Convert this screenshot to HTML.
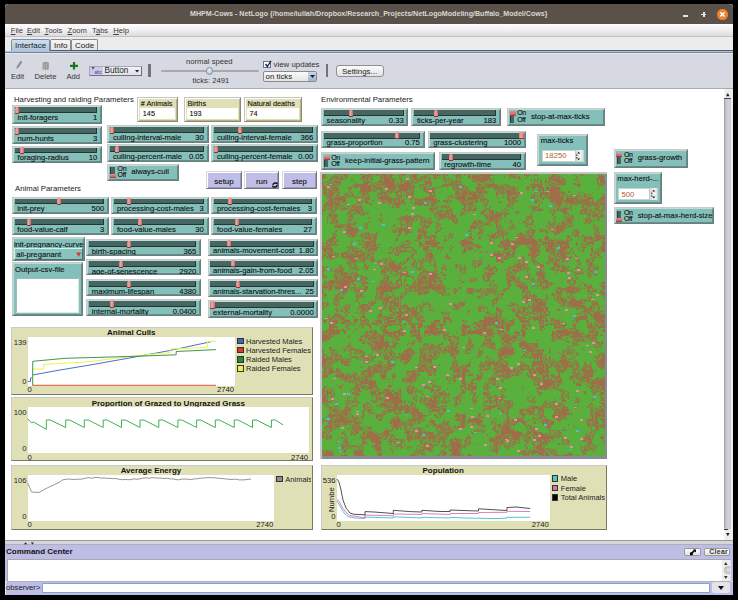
<!DOCTYPE html><html><head><meta charset="utf-8"><style>
*{box-sizing:border-box;margin:0;padding:0}
html,body{width:738px;height:600px;overflow:hidden;background:#000;font-family:"Liberation Sans", sans-serif;}
.a{position:absolute}
.w{position:absolute;border:1px solid;border-color:#c9c9c9 #6e7e7c #6e7e7c #c9c9c9;box-shadow:inset 1px 1px 0 rgba(255,255,255,.45), inset -1px -1px 0 rgba(0,0,0,.25);font-size:7.7px;color:#111;-webkit-text-stroke:0.2px rgba(0,0,0,.5);white-space:nowrap;overflow:hidden}
.sl{background:#85bfb9}
.trk{position:absolute;top:1.1px;height:5.9px;background:#476662;box-shadow:inset -1px -1px 0 #243634}
.knob{position:absolute;top:0.6px;width:4.2px;height:7.3px;background:linear-gradient(90deg,#e07a76,#f2a6a2 45%,#d06460);border-radius:1.5px 1.5px 0 0;border-bottom:1px solid #8a3a38}
.lbl{position:absolute;left:4.6px;top:6.9px;line-height:9px}
.val{position:absolute;right:3.7px;top:6.9px;line-height:9px}
.sw{background:#85bfb9}
.swt{position:absolute;left:2.2px;top:2.2px;width:4.3px;height:11.4px;background:#476662;border-left:1px solid #2a3a38}
.swk{position:absolute;left:1.8px;width:5.8px;height:4.4px;background:linear-gradient(#e89090,#cc5c5c);border-bottom:1px solid #a04040}
.on,.off{position:absolute;left:9.2px;font-size:7px;line-height:8px;letter-spacing:-0.3px}.on{top:0.2px}.off{top:6.6px}
.swl{position:absolute;left:23px;top:2.7px;line-height:9px}
.mon{background:#e0e0b6;border-color:#c4c4c4 #8c8c6c #8c8c6c #c4c4c4;box-shadow:inset 1px 1px 0 #fff, inset -1px -1px 0 #b4b48c}
.ml{position:absolute;left:2.4px;top:0.6px;line-height:9px;font-size:7.3px}
.mv{position:absolute;left:1.6px;right:2px;top:9.5px;bottom:1.3px;background:#fff}
.mv span{position:absolute;left:2.8px;top:0.9px;line-height:9px;font-size:7.3px}
.btn{background:#bebee6;text-align:center;font-size:7.9px;border-color:#d8d8d8 #70708a #70708a #d8d8d8;box-shadow:inset 1px 1px 0 #fff, inset -1px -1px 0 #9a9ab8}
.btn span{position:absolute;left:0;right:0;top:4.7px;line-height:9px}
.fev{position:absolute;left:26.4px;top:9.5px}
.plot{position:absolute;background:#e0e0b6;border:1px solid;border-color:#c9c9c9 #7a7a60 #7a7a60 #c9c9c9;font-size:7.7px;color:#222;white-space:nowrap}
.pt2{text-align:center;font-weight:bold;line-height:9px;font-size:8px;color:#111}
.pa{position:absolute;background:#fff}
.ax{line-height:9px;font-size:7.7px;color:#222}
.lg{line-height:9px;font-size:7.5px;color:#222;white-space:nowrap}
.lg i{position:absolute;left:0;top:1px;width:6.5px;height:6.5px;border:1px solid #333}
.lg span{position:absolute;left:9px;top:0}
</style></head><body>

<div class="a" style="left:5px;top:4px;width:728px;height:590.9px;background:#ececec;border-radius:3px 3px 0 0;overflow:hidden">
</div>
<div class="a" style="left:5px;top:4px;width:728px;height:20px;background:#5a514b;border-radius:4px 4px 0 0"></div>
<div class="a" style="left:190px;top:10.2px;font-size:7.1px;font-weight:bold;color:#dcd8d0;white-space:nowrap;line-height:9px">MHPM-Cows - NetLogo {/home/iullah/Dropbox/Research_Projects/NetLogoModeling/Buffalo_Model/Cows}</div>
<div class="a" style="left:683.2px;top:15.2px;width:5px;height:1.6px;background:#e6e2da"></div>
<div class="a" style="left:701.4px;top:13.7px;width:5px;height:1.6px;background:#e6e2da"></div><div class="a" style="left:703.1px;top:12px;width:1.6px;height:5px;background:#e6e2da"></div>
<div class="a" style="left:717.4px;top:9px;width:10.6px;height:10.6px;border-radius:50%;background:#f0842c"></div>
<svg class="a" style="left:717.4px;top:9px" width="11" height="11"><path d="M3.3 3.3 L7.5 7.5 M7.5 3.3 L3.3 7.5" stroke="#fff" stroke-width="1.5"/></svg>
<div class="a" style="left:5px;top:24px;width:728px;height:13.4px;background:linear-gradient(#fdfdfd,#f2f2f4 45%,#dcdce0);border-bottom:1.4px solid #c0c0c6"></div>
<div class="a" style="left:10.8px;top:25.8px;font-size:7.6px;color:#3a3a3a;line-height:9px"><u>F</u>ile</div>
<div class="a" style="left:27px;top:25.8px;font-size:7.6px;color:#3a3a3a;line-height:9px"><u>E</u>dit</div>
<div class="a" style="left:44.6px;top:25.8px;font-size:7.6px;color:#3a3a3a;line-height:9px"><u>T</u>ools</div>
<div class="a" style="left:67.5px;top:25.8px;font-size:7.6px;color:#3a3a3a;line-height:9px"><u>Z</u>oom</div>
<div class="a" style="left:92.1px;top:25.8px;font-size:7.6px;color:#3a3a3a;line-height:9px">T<u>a</u>bs</div>
<div class="a" style="left:113.3px;top:25.8px;font-size:7.6px;color:#3a3a3a;line-height:9px"><u>H</u>elp</div>
<div class="a" style="left:5px;top:37px;width:728px;height:14px;background:#ececec"></div>
<div class="a" style="left:11px;top:38.5px;width:39px;height:13px;background:linear-gradient(#cfdff0,#a9c2dc);border:1px solid #7e8ea0;border-bottom:none;border-radius:2px 2px 0 0"></div>
<div class="a" style="left:15px;top:40.5px;font-size:8px;color:#222;line-height:9px">Interface</div>
<div class="a" style="left:50px;top:39px;width:21px;height:12px;background:linear-gradient(#f4f4f4,#e4e4e4);border:1px solid #8a8a8a;border-bottom:none;border-radius:2px 2px 0 0"></div>
<div class="a" style="left:54px;top:40.5px;font-size:8px;color:#222;line-height:9px">Info</div>
<div class="a" style="left:71px;top:39px;width:27px;height:12px;background:linear-gradient(#f4f4f4,#e4e4e4);border:1px solid #8a8a8a;border-bottom:none;border-radius:2px 2px 0 0"></div>
<div class="a" style="left:75px;top:40.5px;font-size:8px;color:#222;line-height:9px">Code</div>
<div class="a" style="left:50px;top:50.2px;width:683px;height:0.8px;background:#505868"></div><div class="a" style="left:5px;top:50.8px;width:728px;height:1.6px;background:#afc4dc"></div>
<div class="a" style="left:5px;top:52.3px;width:728px;height:36.7px;background:#d6d9e1;border-bottom:1px solid #a8aab0;border-top:1.2px solid #76849a;box-shadow:inset 0 1px 0 #e6e8ee"></div>
<svg class="a" style="left:0;top:0" width="100" height="90"><path d="M16.3 69 L17 66 L20.6 60.8 L22.4 62 L18.8 67.2 Z" fill="#8e8e8e"/><path d="M42.6 62.8 Q45.7 60.6 48.8 62.8 L48.8 69.2 Q45.7 70.4 42.6 69.2 Z" fill="#9a9a9a"/><path d="M44.2 63.5 V68.8 M46.6 63.5 V68.8" stroke="#b8b8b8" stroke-width="0.8"/><path d="M70 65.85 H78 M74 62.1 V69.6" stroke="#1a7a1a" stroke-width="2.2"/></svg>
<div class="a" style="left:11px;top:72px;font-size:7.6px;color:#333;line-height:9px">Edit</div>
<div class="a" style="left:34.5px;top:72px;font-size:7.6px;color:#333;line-height:9px">Delete</div>
<div class="a" style="left:66.5px;top:72px;font-size:7.6px;color:#333;line-height:9px">Add</div>
<div class="a" style="left:88.8px;top:65.5px;width:53px;height:10.3px;background:linear-gradient(#f2f2f6,#e0e0e6);border:1px solid;border-color:#a8a8b0 #707078 #707078 #a8a8b0"></div>
<div class="a" style="left:90.3px;top:66.6px;width:12.5px;height:8px;background:#c8c8f0"></div>
<svg class="a" style="left:91px;top:67px" width="12" height="8"><path d="M0.5 0.3 L3.5 0.3 L2 2.2Z" fill="#223"/><text x="3.6" y="6.6" font-size="4.5" font-family="Liberation Sans" fill="#445">abc</text></svg>
<div class="a" style="left:104.6px;top:66.2px;font-size:8.2px;color:#222;line-height:9px">Button</div>
<svg class="a" style="left:135px;top:69.6px" width="5" height="3"><path d="M0 0 L4.2 0 L2.1 2.5Z" fill="#222"/></svg>
<div class="a" style="left:148.3px;top:64.3px;width:2.4px;height:12.5px;background:#747474"></div>
<div class="a" style="left:186px;top:56.5px;font-size:7.7px;color:#333;line-height:9px">normal speed</div>
<div class="a" style="left:160.5px;top:70px;width:98px;height:1.6px;background:#a6a9ae;border-radius:1px"></div>
<div class="a" style="left:205.5px;top:67px;width:7.5px;height:7.5px;border-radius:50%;background:radial-gradient(circle at 40% 35%,#e6eef6,#a6bcd2);border:1px solid #8090a4"></div>
<div class="a" style="left:192.5px;top:76px;font-size:7.7px;color:#333;line-height:9px">ticks: 2491</div>
<div class="a" style="left:263px;top:60.5px;width:7.5px;height:7.5px;background:#fff;border:1px solid #5a7aa0"></div>
<svg class="a" style="left:263.5px;top:59.5px" width="8" height="8"><path d="M1.5 4 L3.3 6.5 L7 0.8" stroke="#223" stroke-width="1.3" fill="none"/></svg>
<div class="a" style="left:273.5px;top:59.5px;font-size:7.9px;color:#333;line-height:9px">view updates</div>
<div class="a" style="left:263px;top:70.5px;width:53.5px;height:11px;background:linear-gradient(#fafafa,#e4e4e4);border:1px solid #8a8a8a;border-radius:2px"></div>
<div class="a" style="left:307.5px;top:71.5px;width:8px;height:9px;background:linear-gradient(#c8d6e6,#9fb4cc)"></div>
<svg class="a" style="left:309.5px;top:74.5px" width="5" height="3"><path d="M0 0 L5 0 L2.5 3Z" fill="#222"/></svg>
<div class="a" style="left:265.5px;top:71.5px;font-size:7.9px;color:#222;line-height:9px">on ticks</div>
<div class="a" style="left:325.5px;top:63.7px;width:2.5px;height:13.3px;background:#747474"></div>
<div class="a" style="left:335.5px;top:64.8px;width:48px;height:12.7px;background:linear-gradient(#fbfbfb,#e2e2e2);border:1px solid #909090;border-radius:3px"></div>
<div class="a" style="left:342px;top:66.5px;font-size:7.9px;color:#222;line-height:9px">Settings...</div>
<div class="a" style="left:5px;top:89px;width:719px;height:451px;background:#fff"></div>
<div class="a" style="left:724px;top:89px;width:8.8px;height:451px;background:#ededed;border-left:1px solid #f8f8f8"></div>
<div class="a" style="left:724px;top:98.3px;width:7.2px;height:431.4px;background:linear-gradient(90deg,#9a9aa0,#c4c4ca 25%,#d2d2d8 60%,#c8c8ce);border-radius:0 0 4px 4px;border-top:1px solid #444"></div>
<div class="a" style="left:724px;top:528.5px;width:4px;height:1.2px;background:#333"></div>
<svg class="a" style="left:726px;top:92.5px" width="4" height="4"><path d="M0 3.3 L3.6 3.3 L1.8 0Z" fill="#222"/></svg>
<svg class="a" style="left:726.2px;top:533px" width="4" height="4"><path d="M0 0 L3.6 0 L1.8 3.3Z" fill="#222"/></svg>
<div class="a" style="left:14px;top:94.5px;font-size:7.75px;color:#222;line-height:9px">Harvesting and raiding Parameters</div>
<div class="a" style="left:15px;top:184px;font-size:7.75px;color:#222;line-height:9px">Animal Parameters</div>
<div class="a" style="left:321px;top:94.5px;font-size:7.75px;color:#222;line-height:9px">Environmental Parameters</div>
<div class="w sl" style="left:12px;top:105px;width:90px;height:18.5px;"><div class="trk" style="left:1.9px;width:82.4px"></div><div class="knob" style="left:1.9px"></div><span class="lbl">init-foragers</span><span class="val">1</span></div>
<div class="w sl" style="left:12px;top:126px;width:90px;height:17.5px;"><div class="trk" style="left:1.9px;width:82.4px"></div><div class="knob" style="left:1.9px"></div><span class="lbl">num-hunts</span><span class="val">3</span></div>
<div class="w sl" style="left:12px;top:145.5px;width:90px;height:17.5px;"><div class="trk" style="left:1.9px;width:82.4px"></div><div class="knob" style="left:7.3px"></div><span class="lbl">foraging-radius</span><span class="val">10</span></div>
<div class="w sl" style="left:107.3px;top:125px;width:101.3px;height:18px;"><div class="trk" style="left:1.9px;width:93.7px"></div><div class="knob" style="left:1.9px"></div><span class="lbl">culling-interval-male</span><span class="val">30</span></div>
<div class="w sl" style="left:107.3px;top:144px;width:101.3px;height:17.5px;"><div class="trk" style="left:1.9px;width:93.7px"></div><div class="knob" style="left:6.4px"></div><span class="lbl">culling-percent-male</span><span class="val">0.05</span></div>
<div class="w sl" style="left:211.4px;top:125px;width:106.6px;height:18px;"><div class="trk" style="left:1.9px;width:99.0px"></div><div class="knob" style="left:25.2px"></div><span class="lbl">culling-interval-female</span><span class="val">366</span></div>
<div class="w sl" style="left:211.4px;top:144px;width:106.6px;height:17.5px;"><div class="trk" style="left:1.9px;width:99.0px"></div><div class="knob" style="left:1.9px"></div><span class="lbl">culling-percent-female</span><span class="val">0.00</span></div>
<div class="w sw" style="left:107.3px;top:163.7px;width:72.00000000000001px;height:16.900000000000006px;"><div class="swt"></div><div class="swk" style="top:9.2px"></div><span class="on">On</span><span class="off">Off</span><span class="swl">always-cull</span></div>
<div class="w mon" style="left:137.4px;top:97.4px;width:41.0px;height:24.39999999999999px;"><span class="ml"># Animals</span><div class="mv"><span>145</span></div></div>
<div class="w mon" style="left:184px;top:97.4px;width:57px;height:24.39999999999999px;"><span class="ml">Births</span><div class="mv"><span>193</span></div></div>
<div class="w mon" style="left:244px;top:97.4px;width:58.39999999999998px;height:24.39999999999999px;"><span class="ml">Natural deaths</span><div class="mv"><span>74</span></div></div>
<div class="w btn" style="left:206.2px;top:171.3px;width:35.60000000000002px;height:18.19999999999999px;"><span>setup</span></div>
<div class="w btn" style="left:244.2px;top:171.3px;width:34.80000000000001px;height:18.19999999999999px;"><span>run</span><svg class="fev" width="6" height="6" viewBox="0 0 6 6"><path d="M0.9 2.9 A2.1 2.1 0 0 1 4.6 1.7 M5.1 3.1 A2.1 2.1 0 0 1 1.4 4.3" stroke="#000" stroke-width="1.3" fill="none"/><path d="M3.6 0.6 L5.8 0.8 L5.3 2.9Z M2.4 5.4 L0.2 5.2 L0.7 3.1Z" fill="#000"/></svg></div>
<div class="w btn" style="left:282.4px;top:171.3px;width:34.30000000000001px;height:18.19999999999999px;"><span>step</span></div>
<div class="w sl" style="left:11.7px;top:196.5px;width:97.3px;height:17.80000000000001px;"><div class="trk" style="left:1.9px;width:89.7px"></div><div class="knob" style="left:44.6px"></div><span class="lbl">init-prey</span><span class="val">500</span></div>
<div class="w sl" style="left:11.7px;top:217.3px;width:97.3px;height:17.5px;"><div class="trk" style="left:1.9px;width:89.7px"></div><div class="knob" style="left:13.9px"></div><span class="lbl">food-value-calf</span><span class="val">3</span></div>
<div class="w sl" style="left:111.4px;top:196.5px;width:97.19999999999999px;height:17.80000000000001px;"><div class="trk" style="left:1.9px;width:89.6px"></div><div class="knob" style="left:14.5px"></div><span class="lbl">processing-cost-males</span><span class="val">3</span></div>
<div class="w sl" style="left:111.4px;top:217.3px;width:97.19999999999999px;height:17.69999999999999px;"><div class="trk" style="left:1.9px;width:89.6px"></div><div class="knob" style="left:25.3px"></div><span class="lbl">food-value-males</span><span class="val">30</span></div>
<div class="w sl" style="left:211.4px;top:196.5px;width:105.29999999999998px;height:17.80000000000001px;"><div class="trk" style="left:1.9px;width:97.7px"></div><div class="knob" style="left:15.9px"></div><span class="lbl">processing-cost-females</span><span class="val">3</span></div>
<div class="w sl" style="left:211.4px;top:217.3px;width:105.29999999999998px;height:17.69999999999999px;"><div class="trk" style="left:1.9px;width:97.7px"></div><div class="knob" style="left:22.5px"></div><span class="lbl">food-value-females</span><span class="val">27</span></div>
<div class="w sl" style="left:86.2px;top:239px;width:114.8px;height:16.80000000000001px;"><div class="trk" style="left:1.9px;width:107.2px"></div><div class="knob" style="left:39.8px"></div><span class="lbl">birth-spacing</span><span class="val">365</span></div>
<div class="w sl" style="left:86.2px;top:259px;width:114.8px;height:16.30000000000001px;"><div class="trk" style="left:1.9px;width:107.2px"></div><div class="knob" style="left:31.7px"></div><span class="lbl">age-of-senescence</span><span class="val">2920</span></div>
<div class="w sl" style="left:86.2px;top:279px;width:114.8px;height:17px;"><div class="trk" style="left:1.9px;width:107.2px"></div><div class="knob" style="left:39.8px"></div><span class="lbl">maximum-lifespan</span><span class="val">4380</span></div>
<div class="w sl" style="left:86.2px;top:298.7px;width:114.8px;height:17.30000000000001px;"><div class="trk" style="left:1.9px;width:107.2px"></div><div class="knob" style="left:23.1px"></div><span class="lbl">internal-mortality</span><span class="val">0.0400</span></div>
<div class="w sl" style="left:207.5px;top:238.6px;width:110.89999999999998px;height:17.200000000000017px;"><div class="trk" style="left:1.9px;width:103.3px"></div><div class="knob" style="left:18.7px"></div><span class="lbl">animals-movement-cost</span><span class="val">1.80</span></div>
<div class="w sl" style="left:207.5px;top:258.6px;width:110.89999999999998px;height:17.899999999999977px;"><div class="trk" style="left:1.9px;width:103.3px"></div><div class="knob" style="left:22.3px"></div><span class="lbl">animals-gain-from-food</span><span class="val">2.05</span></div>
<div class="w sl" style="left:207.5px;top:279.2px;width:110.89999999999998px;height:17.80000000000001px;"><div class="trk" style="left:1.9px;width:103.3px"></div><div class="knob" style="left:27.7px"></div><span class="lbl">animals-starvation-thres...</span><span class="val">25</span></div>
<div class="w sl" style="left:207.5px;top:299.7px;width:110.89999999999998px;height:17.900000000000034px;"><div class="trk" style="left:1.9px;width:103.3px"></div><div class="knob" style="left:1.9px"></div><span class="lbl">external-mortality</span><span class="val">0.0000</span></div>
<div class="w sl" style="left:11.7px;top:237.4px;width:73.3px;height:23.900000000000006px;"><span class="a" style="left:1.2px;top:1.2px;line-height:9px">init-pregnancy-curve</span><div class="a" style="left:1.2px;top:9.8px;width:69.4px;height:11.6px;border:1px solid;border-color:#d4f0ec #4c6e6a #4c6e6a #d4f0ec;background:#88c4be"><span class="a" style="left:1.4px;top:0.5px;line-height:9px">all-preganant</span><svg class="a" style="left:61px;top:2.6px" width="6" height="6"><path d="M0.2 0.4 L5 0.4 L2.6 5Z" fill="#d83030"/></svg></div></div>
<div class="w sl" style="left:11.7px;top:262.3px;width:70.89999999999999px;height:54.0px;"><span class="a" style="left:2.4px;top:2.2px;line-height:9px">Output-csv-file</span><div class="a" style="left:3.3px;top:14.3px;width:63px;height:35.1px;background:#fff;border:1px solid;border-color:#9cbcb8 #d8ece8 #d8ece8 #9cbcb8"></div></div>
<div class="w sl" style="left:321px;top:108.3px;width:87.39999999999998px;height:17.900000000000006px;"><div class="trk" style="left:1.9px;width:79.8px"></div><div class="knob" style="left:26.8px"></div><span class="lbl">seasonality</span><span class="val">0.33</span></div>
<div class="w sl" style="left:411.4px;top:108.3px;width:89.60000000000002px;height:17.900000000000006px;"><div class="trk" style="left:1.9px;width:82.0px"></div><div class="knob" style="left:21.4px"></div><span class="lbl">ticks-per-year</span><span class="val">183</span></div>
<div class="w sw" style="left:507px;top:108.3px;width:98.39999999999998px;height:18.10000000000001px;"><div class="swt"></div><div class="swk" style="top:2.2px"></div><span class="on">On</span><span class="off">Off</span><span class="swl">stop-at-max-ticks</span></div>
<div class="w sl" style="left:321px;top:130.6px;width:103.60000000000002px;height:17.599999999999994px;"><div class="trk" style="left:1.9px;width:96.0px"></div><div class="knob" style="left:72.6px"></div><span class="lbl">grass-proportion</span><span class="val">0.75</span></div>
<div class="w sl" style="left:427.6px;top:130.6px;width:98.19999999999993px;height:17.599999999999994px;"><div class="trk" style="left:1.9px;width:90.6px"></div><div class="knob" style="left:90.9px"></div><span class="lbl">grass-clustering</span><span class="val">1000</span></div>
<div class="w sw" style="left:321px;top:152.4px;width:114.39999999999998px;height:17.19999999999999px;"><div class="swt"></div><div class="swk" style="top:2.2px"></div><span class="on">On</span><span class="off">Off</span><span class="swl">keep-initial-grass-pattern</span></div>
<div class="w sl" style="left:438.7px;top:152.4px;width:87.09999999999997px;height:17.599999999999994px;"><div class="trk" style="left:1.9px;width:79.5px"></div><div class="knob" style="left:9.4px"></div><span class="lbl">regrowth-time</span><span class="val">40</span></div>
<div class="w sl" style="left:537.2px;top:133.5px;width:50.59999999999991px;height:32.0px;"><span class="a" style="left:2.6px;top:1.3px;line-height:9px">max-ticks</span></div><div class="a" style="left:541.7px;top:149.6px;width:41.89999999999998px;height:12.0px;background:#fff;border:1px solid #c4d4d2"></div><div class="a" style="left:545.1px;top:151.1px;line-height:9px;font-size:7.7px;color:#b0602c">18250</div><div class="a" style="left:574.6px;top:150.0px;width:8.2px;height:11.2px;background:linear-gradient(90deg,#d8d8d8,#f2f2f2 60%,#e0e0e0);border-left:1px solid #c8c8c8"></div><svg class="a" style="left:576.4px;top:150.79999999999998px" width="6" height="12.0"><path d="M1.2 2.6 L4.2 2.6 L2.7 0.8Z M1.2 7.4 L4.2 7.4 L2.7 9.2Z" fill="#222"/><rect x="0" y="3.5" width="1.3" height="1.5" fill="#555"/><rect x="0" y="6.0" width="1.3" height="1.5" fill="#555"/></svg>
<div class="w sw" style="left:613.7px;top:149.4px;width:74.0px;height:18.19999999999999px;"><div class="swt"></div><div class="swk" style="top:2.2px"></div><span class="on">On</span><span class="off">Off</span><span class="swl">grass-growth</span></div>
<div class="w sl" style="left:613.7px;top:171.7px;width:48.299999999999955px;height:32.30000000000001px;"><span class="a" style="left:2.6px;top:1.3px;line-height:9px">max-herd-...</span></div><div class="a" style="left:618px;top:188px;width:40.299999999999955px;height:12.199999999999989px;background:#fff;border:1px solid #c4d4d2"></div><div class="a" style="left:621.4px;top:189.5px;line-height:9px;font-size:7.7px;color:#b0602c">500</div><div class="a" style="left:649.3px;top:188.4px;width:8.2px;height:11.399999999999988px;background:linear-gradient(90deg,#d8d8d8,#f2f2f2 60%,#e0e0e0);border-left:1px solid #c8c8c8"></div><svg class="a" style="left:651.0999999999999px;top:189.2px" width="6" height="12.199999999999989"><path d="M1.2 2.6 L4.2 2.6 L2.7 0.8Z M1.2 7.6 L4.2 7.6 L2.7 9.4Z" fill="#222"/><rect x="0" y="3.6" width="1.3" height="1.5" fill="#555"/><rect x="0" y="6.1" width="1.3" height="1.5" fill="#555"/></svg>
<div class="w sw" style="left:613.7px;top:207.4px;width:100.59999999999991px;height:17.099999999999994px;"><div class="swt"></div><div class="swk" style="top:9.2px"></div><span class="on">On</span><span class="off">Off</span><span class="swl">stop-at-max-herd-size</span></div>
<div class="a" style="left:320.4px;top:171.8px;width:286.6px;height:286.9px;background:#8a8a92;border-top:2px solid #c4c4c8;border-left:2px solid #c4c4c8"></div>
<svg class="a" style="left:322.4px;top:173.8px" width="282.8" height="282.3" shape-rendering="crispEdges"><defs><pattern id="dz" width="37" height="37" patternUnits="userSpaceOnUse"><rect width="37" height="37" fill="#59b03c"/><path d="M1 0.5h2M4 0.5h2M7 0.5h4M12 0.5h1M15 0.5h2M18 0.5h1M20 0.5h1M22 0.5h1M24 0.5h1M26 0.5h1M28 0.5h2M31 0.5h4M0 1.5h3M4 1.5h1M7 1.5h2M11 1.5h1M14 1.5h1M18 1.5h7M26 1.5h2M29 1.5h3M34 1.5h3M1 2.5h2M4 2.5h1M8 2.5h2M11 2.5h2M14 2.5h1M16 2.5h1M19 2.5h2M23 2.5h1M27 2.5h2M33 2.5h4M0 3.5h2M3 3.5h2M7 3.5h2M10 3.5h3M15 3.5h3M20 3.5h2M24 3.5h1M26 3.5h1M28 3.5h2M31 3.5h4M36 3.5h1M0 4.5h2M4 4.5h4M9 4.5h1M12 4.5h1M14 4.5h6M21 4.5h3M25 4.5h3M29 4.5h1M32 4.5h1M34 4.5h1M0 5.5h2M4 5.5h1M6 5.5h3M11 5.5h1M15 5.5h1M17 5.5h3M21 5.5h1M24 5.5h3M28 5.5h3M32 5.5h1M34 5.5h1M36 5.5h1M1 6.5h2M4 6.5h2M7 6.5h1M10 6.5h8M20 6.5h1M22 6.5h2M29 6.5h1M31 6.5h1M34 6.5h1M36 6.5h1M0 7.5h2M3 7.5h1M6 7.5h3M10 7.5h1M12 7.5h5M18 7.5h2M25 7.5h1M28 7.5h1M31 7.5h1M33 7.5h3M0 8.5h1M3 8.5h3M8 8.5h6M15 8.5h7M25 8.5h12M1 9.5h2M5 9.5h4M10 9.5h1M13 9.5h1M16 9.5h7M24 9.5h1M27 9.5h6M34 9.5h2M0 10.5h2M4 10.5h1M6 10.5h2M11 10.5h1M13 10.5h1M15 10.5h3M19 10.5h1M24 10.5h11M36 10.5h1M1 11.5h3M6 11.5h1M8 11.5h5M15 11.5h1M17 11.5h8M26 11.5h4M32 11.5h5M1 12.5h2M4 12.5h2M8 12.5h2M11 12.5h4M16 12.5h5M22 12.5h1M24 12.5h1M26 12.5h1M28 12.5h1M33 12.5h1M35 12.5h2M0 13.5h1M2 13.5h1M4 13.5h5M10 13.5h3M15 13.5h4M22 13.5h3M27 13.5h2M32 13.5h5M1 14.5h3M6 14.5h4M11 14.5h2M14 14.5h1M17 14.5h5M25 14.5h4M31 14.5h3M36 14.5h1M1 15.5h2M4 15.5h1M6 15.5h5M12 15.5h9M22 15.5h5M28 15.5h2M31 15.5h1M33 15.5h2M36 15.5h1M0 16.5h4M5 16.5h9M15 16.5h2M19 16.5h2M25 16.5h1M29 16.5h1M31 16.5h1M34 16.5h3M0 17.5h1M2 17.5h2M6 17.5h4M12 17.5h1M14 17.5h2M17 17.5h1M19 17.5h1M21 17.5h3M25 17.5h2M28 17.5h2M33 17.5h2M1 18.5h1M3 18.5h6M10 18.5h1M12 18.5h1M15 18.5h6M22 18.5h2M25 18.5h1M27 18.5h4M33 18.5h2M1 19.5h3M5 19.5h3M10 19.5h10M21 19.5h1M26 19.5h3M31 19.5h1M33 19.5h2M36 19.5h1M0 20.5h5M6 20.5h3M10 20.5h18M29 20.5h1M31 20.5h1M35 20.5h2M0 21.5h1M3 21.5h1M5 21.5h4M10 21.5h15M26 21.5h3M30 21.5h2M33 21.5h2M36 21.5h1M1 22.5h1M3 22.5h1M5 22.5h6M13 22.5h1M17 22.5h4M23 22.5h2M26 22.5h2M29 22.5h2M32 22.5h2M35 22.5h2M0 23.5h8M10 23.5h2M13 23.5h4M18 23.5h3M22 23.5h1M26 23.5h5M33 23.5h1M35 23.5h2M0 24.5h2M3 24.5h2M6 24.5h1M8 24.5h2M11 24.5h4M17 24.5h1M19 24.5h3M23 24.5h4M28 24.5h1M30 24.5h7M0 25.5h1M2 25.5h7M10 25.5h5M19 25.5h1M22 25.5h2M25 25.5h1M27 25.5h1M29 25.5h1M31 25.5h1M33 25.5h1M36 25.5h1M1 26.5h3M5 26.5h4M12 26.5h1M14 26.5h1M16 26.5h2M21 26.5h1M25 26.5h2M28 26.5h2M31 26.5h3M35 26.5h1M2 27.5h2M7 27.5h3M11 27.5h3M18 27.5h1M21 27.5h2M25 27.5h9M35 27.5h1M0 28.5h1M4 28.5h4M11 28.5h1M13 28.5h1M16 28.5h1M18 28.5h3M24 28.5h1M26 28.5h1M28 28.5h3M32 28.5h2M35 28.5h1M0 29.5h1M2 29.5h1M4 29.5h1M6 29.5h3M11 29.5h3M15 29.5h7M23 29.5h2M26 29.5h4M33 29.5h3M1 30.5h2M5 30.5h1M7 30.5h3M11 30.5h1M13 30.5h6M22 30.5h1M24 30.5h3M28 30.5h8M0 31.5h2M3 31.5h3M10 31.5h3M14 31.5h5M22 31.5h3M26 31.5h1M28 31.5h4M34 31.5h1M36 31.5h1M1 32.5h1M4 32.5h1M6 32.5h1M8 32.5h2M12 32.5h2M15 32.5h10M26 32.5h1M28 32.5h1M30 32.5h2M34 32.5h2M0 33.5h5M6 33.5h2M9 33.5h2M13 33.5h2M16 33.5h2M19 33.5h1M21 33.5h2M27 33.5h2M30 33.5h3M34 33.5h1M36 33.5h1M0 34.5h2M3 34.5h5M10 34.5h3M14 34.5h1M16 34.5h1M20 34.5h1M23 34.5h4M28 34.5h2M31 34.5h1M33 34.5h4M0 35.5h1M2 35.5h3M6 35.5h7M15 35.5h2M18 35.5h2M22 35.5h11M34 35.5h3M0 36.5h3M4 36.5h1M9 36.5h1M15 36.5h1M18 36.5h1M20 36.5h3M25 36.5h2M28 36.5h1M30 36.5h5M36 36.5h1" stroke="#9d6e48" stroke-width="1"/></pattern></defs><rect width="282.8" height="282.3" fill="#59b03c"/><g transform="scale(1.2)"><path d="M0 0.5h1M2 0.5h2M10 0.5h7M20 0.5h2M32 0.5h8M43 0.5h7M54 0.5h6M63 0.5h4M68 0.5h2M72 0.5h3M79 0.5h1M83 0.5h1M86 0.5h19M109 0.5h4M114 0.5h6M121 0.5h2M124 0.5h7M132 0.5h2M140 0.5h3M153 0.5h3M161 0.5h3M168 0.5h7M176 0.5h3M190 0.5h2M194 0.5h3M208 0.5h5M215 0.5h4M230 0.5h3M2 1.5h2M9 1.5h9M19 1.5h3M34 1.5h16M54 1.5h6M64 1.5h6M73 1.5h3M79 1.5h3M85 1.5h6M92 1.5h13M110 1.5h3M115 1.5h4M121 1.5h6M128 1.5h6M140 1.5h3M152 1.5h4M159 1.5h6M168 1.5h7M177 1.5h3M189 1.5h3M194 1.5h6M209 1.5h3M215 1.5h3M230 1.5h4M2 2.5h2M7 2.5h15M33 2.5h11M48 2.5h3M55 2.5h5M64 2.5h5M73 2.5h4M78 2.5h12M92 2.5h14M111 2.5h6M122 2.5h4M130 2.5h3M140 2.5h3M152 2.5h13M169 2.5h6M178 2.5h3M188 2.5h3M194 2.5h7M209 2.5h4M229 2.5h2M233 2.5h3M1 3.5h3M6 3.5h14M32 3.5h12M48 3.5h4M57 3.5h5M64 3.5h3M73 3.5h1M75 3.5h2M79 3.5h12M92 3.5h7M101 3.5h6M112 3.5h4M123 3.5h3M130 3.5h3M140 3.5h3M155 3.5h2M160 3.5h6M169 3.5h3M178 3.5h3M186 3.5h4M195 3.5h7M210 3.5h3M228 3.5h3M233 3.5h3M0 4.5h1M6 4.5h13M24 4.5h2M33 4.5h10M48 4.5h5M57 4.5h5M64 4.5h4M75 4.5h1M78 4.5h8M87 4.5h4M93 4.5h3M101 4.5h7M112 4.5h4M124 4.5h2M129 4.5h2M138 4.5h1M140 4.5h3M150 4.5h1M164 4.5h2M174 4.5h1M177 4.5h5M186 4.5h3M198 4.5h5M211 4.5h2M228 4.5h4M235 4.5h1M0 5.5h1M5 5.5h12M24 5.5h2M34 5.5h8M47 5.5h5M60 5.5h2M65 5.5h9M75 5.5h16M101 5.5h9M111 5.5h5M124 5.5h6M138 5.5h5M173 5.5h10M186 5.5h3M200 5.5h3M211 5.5h4M229 5.5h3M235 5.5h1M0 6.5h1M4 6.5h5M10 6.5h6M34 6.5h8M46 6.5h5M60 6.5h22M85 6.5h7M101 6.5h15M125 6.5h7M133 6.5h2M137 6.5h7M173 6.5h10M186 6.5h9M199 6.5h5M211 6.5h5M229 6.5h3M234 6.5h2M0 7.5h3M4 7.5h12M27 7.5h2M34 7.5h2M38 7.5h5M44 7.5h5M60 7.5h9M71 7.5h9M85 7.5h7M101 7.5h9M112 7.5h5M128 7.5h16M174 7.5h6M182 7.5h1M186 7.5h17M209 7.5h7M229 7.5h7M0 8.5h3M4 8.5h12M26 8.5h10M38 8.5h10M61 8.5h7M72 8.5h5M81 8.5h9M91 8.5h1M100 8.5h9M114 8.5h4M129 8.5h17M150 8.5h5M173 8.5h4M178 8.5h5M186 8.5h2M189 8.5h14M210 8.5h6M229 8.5h7M0 9.5h14M26 9.5h10M40 9.5h9M50 9.5h4M61 9.5h7M73 9.5h5M81 9.5h11M99 9.5h13M114 9.5h5M130 9.5h27M173 9.5h11M187 9.5h15M211 9.5h5M230 9.5h6M0 10.5h14M23 10.5h11M41 10.5h7M49 10.5h6M60 10.5h7M74 10.5h5M81 10.5h1M84 10.5h6M98 10.5h4M103 10.5h2M108 10.5h13M129 10.5h32M163 10.5h1M171 10.5h6M178 10.5h6M187 10.5h5M193 10.5h4M213 10.5h2M230 10.5h3M1 11.5h14M22 11.5h11M41 11.5h15M59 11.5h7M74 11.5h5M81 11.5h2M84 11.5h6M92 11.5h2M95 11.5h3M99 11.5h2M103 11.5h1M109 11.5h13M128 11.5h21M150 11.5h13M170 11.5h15M187 11.5h4M194 11.5h4M213 11.5h1M229 11.5h2M0 12.5h15M22 12.5h3M29 12.5h3M41 12.5h11M53 12.5h5M59 12.5h6M72 12.5h5M84 12.5h11M109 12.5h13M128 12.5h5M134 12.5h3M142 12.5h21M170 12.5h5M176 12.5h9M187 12.5h2M196 12.5h3M229 12.5h2M1 13.5h5M7 13.5h6M22 13.5h1M30 13.5h3M39 13.5h7M48 13.5h3M53 13.5h12M72 13.5h5M84 13.5h10M111 13.5h12M128 13.5h4M135 13.5h2M144 13.5h19M171 13.5h3M177 13.5h9M187 13.5h3M196 13.5h4M1 14.5h12M14 14.5h1M22 14.5h3M30 14.5h3M37 14.5h6M44 14.5h1M49 14.5h21M71 14.5h6M85 14.5h9M111 14.5h16M128 14.5h4M134 14.5h4M145 14.5h19M177 14.5h8M187 14.5h3M196 14.5h5M205 14.5h2M213 14.5h4M1 15.5h14M22 15.5h3M31 15.5h8M47 15.5h7M55 15.5h22M87 15.5h7M111 15.5h21M134 15.5h5M145 15.5h13M160 15.5h5M177 15.5h4M182 15.5h8M197 15.5h6M205 15.5h3M213 15.5h5M225 15.5h2M1 16.5h10M14 16.5h1M19 16.5h7M30 16.5h8M47 16.5h7M55 16.5h2M61 16.5h16M88 16.5h6M111 16.5h15M128 16.5h4M133 16.5h5M145 16.5h3M149 16.5h9M160 16.5h5M176 16.5h14M198 16.5h5M207 16.5h1M213 16.5h7M2 17.5h8M12 17.5h3M18 17.5h9M29 17.5h10M46 17.5h10M61 17.5h16M89 17.5h5M107 17.5h1M110 17.5h15M129 17.5h7M145 17.5h2M151 17.5h1M154 17.5h10M174 17.5h16M198 17.5h7M207 17.5h1M211 17.5h13M233 17.5h3M3 18.5h7M12 18.5h3M16 18.5h13M30 18.5h10M46 18.5h4M53 18.5h4M62 18.5h6M70 18.5h7M88 18.5h7M104 18.5h11M116 18.5h9M128 18.5h7M145 18.5h1M154 18.5h10M174 18.5h16M198 18.5h4M204 18.5h5M211 18.5h14M233 18.5h3M4 19.5h19M27 19.5h13M46 19.5h3M53 19.5h4M63 19.5h4M70 19.5h7M86 19.5h7M103 19.5h11M117 19.5h7M128 19.5h6M151 19.5h1M154 19.5h9M174 19.5h16M198 19.5h4M203 19.5h18M222 19.5h4M232 19.5h4M4 20.5h16M28 20.5h12M46 20.5h4M54 20.5h4M60 20.5h8M69 20.5h3M73 20.5h2M77 20.5h3M83 20.5h10M103 20.5h5M111 20.5h3M117 20.5h7M127 20.5h6M134 20.5h3M146 20.5h2M154 20.5h4M159 20.5h3M174 20.5h11M188 20.5h2M198 20.5h3M203 20.5h17M222 20.5h4M231 20.5h5M4 21.5h16M29 21.5h11M48 21.5h2M52 21.5h17M70 21.5h1M73 21.5h2M77 21.5h9M87 21.5h9M103 21.5h5M112 21.5h3M116 21.5h13M132 21.5h6M154 21.5h4M160 21.5h2M175 21.5h10M189 21.5h4M199 21.5h3M203 21.5h2M208 21.5h8M223 21.5h3M230 21.5h6M4 22.5h3M9 22.5h11M29 22.5h10M42 22.5h1M48 22.5h21M74 22.5h1M77 22.5h9M87 22.5h11M101 22.5h7M113 22.5h17M132 22.5h7M148 22.5h1M155 22.5h9M177 22.5h5M190 22.5h4M200 22.5h6M211 22.5h5M222 22.5h5M229 22.5h7M3 23.5h3M9 23.5h11M29 23.5h5M36 23.5h3M50 23.5h5M56 23.5h5M66 23.5h5M74 23.5h1M76 23.5h6M84 23.5h14M103 23.5h4M115 23.5h15M133 23.5h5M147 23.5h3M155 23.5h7M163 23.5h1M177 23.5h3M183 23.5h1M191 23.5h6M200 23.5h6M209 23.5h1M211 23.5h4M217 23.5h2M222 23.5h14M2 24.5h5M10 24.5h11M28 24.5h5M37 24.5h4M51 24.5h4M56 24.5h4M66 24.5h3M76 24.5h5M84 24.5h7M94 24.5h3M104 24.5h2M116 24.5h13M134 24.5h4M148 24.5h1M156 24.5h4M181 24.5h3M192 24.5h15M208 24.5h11M223 24.5h13M2 25.5h5M10 25.5h6M17 25.5h5M26 25.5h6M39 25.5h3M56 25.5h4M65 25.5h5M77 25.5h14M94 25.5h3M104 25.5h1M117 25.5h11M134 25.5h4M155 25.5h4M180 25.5h3M193 25.5h26M223 25.5h10M234 25.5h2M1 26.5h5M9 26.5h6M16 26.5h17M56 26.5h10M68 26.5h1M81 26.5h3M85 26.5h7M94 26.5h4M100 26.5h5M118 26.5h10M134 26.5h4M153 26.5h6M180 26.5h2M193 26.5h16M212 26.5h1M217 26.5h3M223 26.5h10M234 26.5h2M0 27.5h34M56 27.5h9M89 27.5h18M118 27.5h11M135 27.5h2M140 27.5h1M154 27.5h2M157 27.5h2M172 27.5h1M174 27.5h7M193 27.5h16M216 27.5h5M222 27.5h2M227 27.5h6M234 27.5h2M0 28.5h30M32 28.5h2M62 28.5h2M88 28.5h9M99 28.5h2M104 28.5h4M117 28.5h12M135 28.5h5M152 28.5h1M157 28.5h2M174 28.5h9M193 28.5h16M216 28.5h2M219 28.5h5M227 28.5h9M0 29.5h13M16 29.5h10M28 29.5h6M71 29.5h1M89 29.5h5M95 29.5h2M99 29.5h1M104 29.5h4M116 29.5h13M135 29.5h5M151 29.5h5M158 29.5h1M175 29.5h9M189 29.5h19M216 29.5h9M226 29.5h10M0 30.5h12M16 30.5h1M18 30.5h8M28 30.5h6M36 30.5h1M90 30.5h12M103 30.5h5M117 30.5h11M131 30.5h6M139 30.5h4M151 30.5h5M175 30.5h9M188 30.5h20M215 30.5h20M0 31.5h2M6 31.5h5M20 31.5h14M36 31.5h1M38 31.5h1M91 31.5h17M116 31.5h7M125 31.5h1M131 31.5h6M139 31.5h7M149 31.5h7M162 31.5h2M175 31.5h2M189 31.5h7M199 31.5h8M215 31.5h19M0 32.5h1M6 32.5h6M21 32.5h18M48 32.5h1M93 32.5h5M99 32.5h5M106 32.5h3M115 32.5h6M132 32.5h6M139 32.5h17M161 32.5h3M174 32.5h2M191 32.5h4M201 32.5h5M215 32.5h19M0 33.5h1M6 33.5h7M21 33.5h7M30 33.5h1M32 33.5h4M48 33.5h2M79 33.5h1M93 33.5h4M101 33.5h2M106 33.5h4M116 33.5h4M132 33.5h24M173 33.5h2M192 33.5h2M202 33.5h4M215 33.5h3M220 33.5h15M5 34.5h4M11 34.5h2M21 34.5h5M32 34.5h2M48 34.5h2M69 34.5h3M78 34.5h2M81 34.5h2M93 34.5h4M103 34.5h9M115 34.5h2M135 34.5h6M144 34.5h6M152 34.5h1M173 34.5h2M192 34.5h2M202 34.5h7M222 34.5h13M4 35.5h7M12 35.5h1M22 35.5h4M49 35.5h2M66 35.5h8M76 35.5h8M93 35.5h5M102 35.5h10M136 35.5h4M145 35.5h5M152 35.5h1M171 35.5h4M193 35.5h2M202 35.5h8M222 35.5h2M225 35.5h10M4 36.5h6M12 36.5h2M22 36.5h4M38 36.5h3M49 36.5h2M54 36.5h2M64 36.5h27M93 36.5h19M137 36.5h3M145 36.5h5M152 36.5h1M170 36.5h6M193 36.5h2M202 36.5h8M213 36.5h1M220 36.5h3M226 36.5h8M3 37.5h7M11 37.5h3M22 37.5h5M39 37.5h1M47 37.5h5M56 37.5h1M63 37.5h6M74 37.5h18M97 37.5h5M105 37.5h1M107 37.5h6M137 37.5h3M144 37.5h1M146 37.5h4M170 37.5h6M192 37.5h2M201 37.5h9M213 37.5h1M219 37.5h5M227 37.5h5M3 38.5h7M13 38.5h1M21 38.5h6M47 38.5h4M64 38.5h2M68 38.5h1M73 38.5h19M95 38.5h3M108 38.5h5M127 38.5h6M136 38.5h4M143 38.5h5M153 38.5h5M169 38.5h8M190 38.5h1M200 38.5h4M207 38.5h5M219 38.5h6M226 38.5h5M3 39.5h8M12 39.5h2M21 39.5h7M38 39.5h1M48 39.5h2M65 39.5h5M71 39.5h5M79 39.5h8M88 39.5h5M95 39.5h2M108 39.5h5M126 39.5h4M131 39.5h10M142 39.5h5M152 39.5h6M167 39.5h10M188 39.5h7M199 39.5h6M208 39.5h2M219 39.5h6M226 39.5h1M229 39.5h2M4 40.5h10M21 40.5h7M38 40.5h3M65 40.5h10M81 40.5h5M88 40.5h6M95 40.5h2M109 40.5h4M124 40.5h5M131 40.5h17M153 40.5h3M157 40.5h2M167 40.5h10M187 40.5h8M199 40.5h7M207 40.5h3M219 40.5h6M7 41.5h8M20 41.5h3M24 41.5h5M35 41.5h3M64 41.5h12M82 41.5h10M95 41.5h4M110 41.5h3M123 41.5h6M130 41.5h13M144 41.5h4M154 41.5h1M157 41.5h2M163 41.5h1M168 41.5h8M187 41.5h9M197 41.5h12M218 41.5h6M11 42.5h10M24 42.5h4M35 42.5h3M59 42.5h3M64 42.5h11M82 42.5h9M95 42.5h4M123 42.5h3M127 42.5h14M145 42.5h3M157 42.5h3M161 42.5h1M169 42.5h8M187 42.5h23M226 42.5h2M10 43.5h11M24 43.5h4M35 43.5h3M59 43.5h3M65 43.5h9M82 43.5h7M94 43.5h5M123 43.5h12M145 43.5h6M156 43.5h4M169 43.5h9M187 43.5h9M198 43.5h12M226 43.5h4M10 44.5h12M26 44.5h4M35 44.5h3M59 44.5h4M64 44.5h10M83 44.5h6M94 44.5h6M123 44.5h11M145 44.5h5M155 44.5h6M169 44.5h6M188 44.5h7M200 44.5h7M208 44.5h2M226 44.5h5M14 45.5h2M20 45.5h2M27 45.5h3M36 45.5h2M59 45.5h15M80 45.5h7M95 45.5h6M123 45.5h5M130 45.5h5M146 45.5h5M156 45.5h5M170 45.5h5M180 45.5h2M187 45.5h8M200 45.5h3M226 45.5h5M12 46.5h1M20 46.5h1M28 46.5h2M58 46.5h17M80 46.5h7M95 46.5h6M120 46.5h1M123 46.5h4M131 46.5h4M146 46.5h7M156 46.5h2M160 46.5h1M171 46.5h6M181 46.5h15M200 46.5h2M210 46.5h3M227 46.5h4M11 47.5h2M19 47.5h2M28 47.5h3M58 47.5h15M74 47.5h1M79 47.5h4M85 47.5h3M95 47.5h4M122 47.5h4M131 47.5h4M146 47.5h8M170 47.5h8M182 47.5h7M191 47.5h5M199 47.5h3M209 47.5h5M227 47.5h5M11 48.5h1M19 48.5h2M28 48.5h4M36 48.5h3M45 48.5h1M59 48.5h16M79 48.5h4M85 48.5h4M94 48.5h2M124 48.5h1M130 48.5h4M144 48.5h12M163 48.5h3M170 48.5h8M187 48.5h2M192 48.5h9M208 48.5h7M227 48.5h5M8 49.5h3M19 49.5h4M28 49.5h12M43 49.5h4M63 49.5h9M74 49.5h1M80 49.5h8M94 49.5h2M104 49.5h5M123 49.5h2M129 49.5h5M140 49.5h16M163 49.5h5M171 49.5h7M187 49.5h1M193 49.5h5M208 49.5h3M213 49.5h3M227 49.5h4M8 50.5h4M19 50.5h4M27 50.5h3M31 50.5h16M63 50.5h3M67 50.5h4M80 50.5h7M91 50.5h1M103 50.5h7M123 50.5h2M129 50.5h5M136 50.5h1M139 50.5h3M144 50.5h12M162 50.5h3M166 50.5h2M170 50.5h7M193 50.5h4M208 50.5h3M213 50.5h3M227 50.5h5M9 51.5h5M21 51.5h8M31 51.5h15M63 51.5h2M69 51.5h2M80 51.5h8M90 51.5h5M102 51.5h7M123 51.5h2M131 51.5h1M137 51.5h4M144 51.5h9M162 51.5h3M167 51.5h10M194 51.5h1M204 51.5h14M227 51.5h9M8 52.5h4M22 52.5h6M32 52.5h14M63 52.5h2M79 52.5h4M85 52.5h11M102 52.5h7M122 52.5h3M131 52.5h2M139 52.5h2M144 52.5h4M150 52.5h2M162 52.5h2M167 52.5h6M175 52.5h2M186 52.5h3M204 52.5h4M211 52.5h14M226 52.5h10M6 53.5h6M35 53.5h11M62 53.5h3M78 53.5h5M85 53.5h1M87 53.5h8M103 53.5h5M121 53.5h6M130 53.5h3M138 53.5h4M143 53.5h2M151 53.5h1M153 53.5h2M161 53.5h3M176 53.5h2M185 53.5h5M204 53.5h5M213 53.5h23M6 54.5h7M29 54.5h2M32 54.5h2M37 54.5h8M61 54.5h2M73 54.5h1M78 54.5h4M84 54.5h3M88 54.5h3M92 54.5h3M102 54.5h4M118 54.5h9M138 54.5h6M149 54.5h1M151 54.5h5M162 54.5h2M176 54.5h16M193 54.5h7M203 54.5h6M214 54.5h22M0 55.5h1M3 55.5h11M25 55.5h1M29 55.5h5M36 55.5h9M60 55.5h3M68 55.5h6M77 55.5h4M84 55.5h11M102 55.5h2M116 55.5h3M122 55.5h4M139 55.5h5M149 55.5h11M161 55.5h3M177 55.5h24M203 55.5h5M214 55.5h1M216 55.5h20M3 56.5h11M24 56.5h2M31 56.5h1M33 56.5h12M60 56.5h2M68 56.5h5M81 56.5h2M86 56.5h11M102 56.5h2M115 56.5h4M122 56.5h4M140 56.5h4M148 56.5h17M178 56.5h29M217 56.5h11M233 56.5h3M1 57.5h1M3 57.5h3M7 57.5h5M24 57.5h1M31 57.5h7M39 57.5h6M66 57.5h8M81 57.5h3M86 57.5h12M103 57.5h1M114 57.5h5M122 57.5h4M140 57.5h3M148 57.5h2M152 57.5h19M179 57.5h9M189 57.5h1M191 57.5h15M212 57.5h1M216 57.5h11M233 57.5h3M0 58.5h13M24 58.5h2M31 58.5h6M40 58.5h5M47 58.5h2M66 58.5h7M81 58.5h16M99 58.5h1M115 58.5h9M125 58.5h5M147 58.5h3M153 58.5h21M178 58.5h10M191 58.5h7M201 58.5h5M212 58.5h1M216 58.5h11M233 58.5h3M0 59.5h8M9 59.5h4M22 59.5h5M33 59.5h4M40 59.5h7M60 59.5h1M66 59.5h7M81 59.5h16M99 59.5h2M107 59.5h2M116 59.5h16M147 59.5h4M153 59.5h6M160 59.5h5M170 59.5h6M178 59.5h6M186 59.5h2M191 59.5h7M200 59.5h6M212 59.5h1M216 59.5h6M223 59.5h3M233 59.5h1M0 60.5h7M12 60.5h1M21 60.5h6M33 60.5h14M62 60.5h11M81 60.5h20M107 60.5h2M117 60.5h15M147 60.5h4M152 60.5h12M171 60.5h5M178 60.5h4M186 60.5h2M191 60.5h7M200 60.5h2M204 60.5h2M216 60.5h5M224 60.5h2M232 60.5h2M1 61.5h7M21 61.5h8M33 61.5h15M57 61.5h3M61 61.5h14M83 61.5h5M89 61.5h4M95 61.5h6M108 61.5h2M118 61.5h7M126 61.5h7M148 61.5h8M157 61.5h6M171 61.5h5M178 61.5h4M186 61.5h2M191 61.5h4M196 61.5h3M204 61.5h3M215 61.5h5M225 61.5h1M232 61.5h1M3 62.5h6M21 62.5h11M34 62.5h13M56 62.5h17M74 62.5h3M84 62.5h8M96 62.5h2M99 62.5h2M107 62.5h3M118 62.5h15M152 62.5h4M157 62.5h5M172 62.5h2M179 62.5h3M187 62.5h1M191 62.5h4M197 62.5h2M203 62.5h6M213 62.5h7M224 62.5h2M230 62.5h3M0 63.5h2M3 63.5h7M21 63.5h12M35 63.5h13M56 63.5h23M86 63.5h6M97 63.5h2M107 63.5h2M117 63.5h5M126 63.5h7M146 63.5h2M152 63.5h2M156 63.5h6M172 63.5h3M181 63.5h1M186 63.5h2M190 63.5h8M203 63.5h5M213 63.5h1M216 63.5h3M224 63.5h5M230 63.5h3M0 64.5h11M19 64.5h15M36 64.5h7M56 64.5h20M77 64.5h2M86 64.5h6M97 64.5h2M117 64.5h4M130 64.5h5M137 64.5h1M144 64.5h5M150 64.5h12M173 64.5h2M180 64.5h2M186 64.5h12M202 64.5h9M216 64.5h2M224 64.5h12M0 65.5h5M7 65.5h5M17 65.5h26M55 65.5h12M72 65.5h4M77 65.5h2M86 65.5h6M117 65.5h2M131 65.5h7M143 65.5h18M173 65.5h2M179 65.5h3M186 65.5h12M202 65.5h8M224 65.5h9M0 66.5h5M7 66.5h6M16 66.5h28M56 66.5h9M73 66.5h6M87 66.5h5M95 66.5h2M117 66.5h1M143 66.5h2M149 66.5h5M155 66.5h6M172 66.5h3M178 66.5h4M188 66.5h10M199 66.5h1M202 66.5h8M223 66.5h9M0 67.5h6M8 67.5h6M16 67.5h4M23 67.5h5M30 67.5h1M33 67.5h11M56 67.5h3M61 67.5h3M73 67.5h4M86 67.5h7M103 67.5h2M140 67.5h5M150 67.5h3M156 67.5h5M167 67.5h1M172 67.5h2M176 67.5h5M188 67.5h19M211 67.5h1M223 67.5h9M0 68.5h6M9 68.5h5M16 68.5h3M26 68.5h1M33 68.5h7M42 68.5h2M56 68.5h3M73 68.5h4M86 68.5h7M102 68.5h4M140 68.5h6M150 68.5h3M155 68.5h6M167 68.5h2M173 68.5h1M177 68.5h2M188 68.5h20M211 68.5h2M223 68.5h10M0 69.5h13M17 69.5h5M27 69.5h16M56 69.5h1M72 69.5h5M86 69.5h8M103 69.5h5M145 69.5h2M150 69.5h10M167 69.5h2M173 69.5h1M177 69.5h1M188 69.5h20M211 69.5h2M223 69.5h10M0 70.5h2M4 70.5h7M18 70.5h4M27 70.5h16M51 70.5h6M70 70.5h3M74 70.5h3M83 70.5h11M103 70.5h5M132 70.5h1M145 70.5h2M150 70.5h6M159 70.5h1M167 70.5h2M173 70.5h5M188 70.5h20M211 70.5h3M220 70.5h1M223 70.5h5M0 71.5h1M7 71.5h3M21 71.5h3M27 71.5h2M30 71.5h7M38 71.5h6M50 71.5h9M70 71.5h3M76 71.5h1M81 71.5h1M83 71.5h11M126 71.5h1M131 71.5h3M145 71.5h9M165 71.5h5M174 71.5h4M189 71.5h18M211 71.5h4M220 71.5h7M21 72.5h8M31 72.5h5M40 72.5h4M46 72.5h15M68 72.5h1M70 72.5h2M76 72.5h2M80 72.5h5M86 72.5h9M124 72.5h10M145 72.5h7M163 72.5h7M174 72.5h5M188 72.5h19M212 72.5h3M220 72.5h3M224 72.5h3M21 73.5h8M35 73.5h2M42 73.5h15M59 73.5h3M64 73.5h2M67 73.5h2M76 73.5h9M87 73.5h5M93 73.5h2M123 73.5h11M149 73.5h3M161 73.5h9M176 73.5h5M187 73.5h7M196 73.5h6M203 73.5h2M212 73.5h4M220 73.5h6M21 74.5h7M35 74.5h2M43 74.5h14M60 74.5h10M75 74.5h10M90 74.5h2M93 74.5h2M99 74.5h2M123 74.5h6M130 74.5h3M160 74.5h9M177 74.5h5M187 74.5h7M196 74.5h4M213 74.5h3M220 74.5h7M14 75.5h2M22 75.5h6M35 75.5h2M46 75.5h9M56 75.5h1M62 75.5h6M74 75.5h9M90 75.5h5M98 75.5h4M111 75.5h2M115 75.5h4M124 75.5h9M138 75.5h2M160 75.5h2M166 75.5h6M177 75.5h7M188 75.5h1M191 75.5h3M197 75.5h6M213 75.5h3M221 75.5h9M0 76.5h1M13 76.5h4M22 76.5h6M35 76.5h4M47 76.5h8M63 76.5h6M75 76.5h8M90 76.5h6M98 76.5h5M111 76.5h9M124 76.5h8M136 76.5h8M160 76.5h2M167 76.5h6M180 76.5h5M191 76.5h4M196 76.5h7M213 76.5h2M222 76.5h9M0 77.5h6M13 77.5h4M22 77.5h8M35 77.5h4M48 77.5h8M65 77.5h6M75 77.5h10M93 77.5h3M99 77.5h5M111 77.5h9M127 77.5h4M136 77.5h9M155 77.5h7M166 77.5h7M180 77.5h5M191 77.5h12M204 77.5h2M212 77.5h3M222 77.5h6M229 77.5h2M0 78.5h8M12 78.5h6M23 78.5h8M33 78.5h6M48 78.5h8M65 78.5h6M76 78.5h10M93 78.5h2M99 78.5h5M111 78.5h11M135 78.5h6M143 78.5h4M154 78.5h9M165 78.5h8M180 78.5h6M190 78.5h17M211 78.5h7M222 78.5h9M0 79.5h4M6 79.5h3M11 79.5h8M23 79.5h9M35 79.5h3M49 79.5h9M65 79.5h6M79 79.5h8M93 79.5h4M99 79.5h5M113 79.5h8M135 79.5h3M142 79.5h5M152 79.5h21M180 79.5h5M190 79.5h17M211 79.5h7M220 79.5h10M0 80.5h4M6 80.5h13M23 80.5h7M49 80.5h11M64 80.5h7M82 80.5h5M93 80.5h4M100 80.5h4M114 80.5h6M135 80.5h3M142 80.5h4M152 80.5h16M170 80.5h4M180 80.5h6M192 80.5h17M211 80.5h8M220 80.5h9M0 81.5h2M7 81.5h11M22 81.5h7M49 81.5h4M54 81.5h7M63 81.5h9M83 81.5h6M91 81.5h7M99 81.5h2M115 81.5h5M134 81.5h6M142 81.5h4M153 81.5h6M160 81.5h4M170 81.5h3M179 81.5h2M182 81.5h4M193 81.5h3M198 81.5h7M207 81.5h2M211 81.5h8M221 81.5h5M227 81.5h2M0 82.5h2M10 82.5h19M38 82.5h1M49 82.5h4M57 82.5h1M59 82.5h13M82 82.5h20M116 82.5h4M134 82.5h10M153 82.5h6M160 82.5h2M170 82.5h3M178 82.5h2M183 82.5h3M195 82.5h1M203 82.5h1M210 82.5h8M221 82.5h8M0 83.5h2M10 83.5h21M50 83.5h3M59 83.5h13M81 83.5h10M93 83.5h1M96 83.5h2M100 83.5h3M134 83.5h9M153 83.5h8M171 83.5h4M178 83.5h5M184 83.5h3M210 83.5h3M214 83.5h2M222 83.5h7M1 84.5h2M10 84.5h23M50 84.5h5M59 84.5h4M65 84.5h9M80 84.5h8M95 84.5h2M100 84.5h3M113 84.5h3M133 84.5h9M153 84.5h8M171 84.5h3M179 84.5h4M184 84.5h3M210 84.5h2M221 84.5h4M227 84.5h2M0 85.5h3M9 85.5h14M24 85.5h10M35 85.5h2M52 85.5h4M59 85.5h1M65 85.5h1M70 85.5h6M79 85.5h10M94 85.5h3M115 85.5h1M133 85.5h8M154 85.5h8M163 85.5h2M171 85.5h3M179 85.5h8M221 85.5h3M0 86.5h4M10 86.5h11M25 86.5h13M51 86.5h6M64 86.5h2M70 86.5h1M75 86.5h2M79 86.5h11M94 86.5h5M115 86.5h1M124 86.5h2M133 86.5h8M153 86.5h12M170 86.5h6M179 86.5h8M208 86.5h5M223 86.5h1M11 87.5h10M26 87.5h12M50 87.5h6M63 87.5h7M76 87.5h1M79 87.5h10M94 87.5h6M102 87.5h1M115 87.5h1M123 87.5h6M134 87.5h7M153 87.5h12M168 87.5h19M207 87.5h6M5 88.5h11M18 88.5h2M26 88.5h11M49 88.5h7M62 88.5h8M77 88.5h12M94 88.5h6M113 88.5h4M122 88.5h7M135 88.5h9M153 88.5h12M174 88.5h11M186 88.5h2M200 88.5h1M204 88.5h8M2 89.5h12M26 89.5h11M48 89.5h8M57 89.5h3M62 89.5h8M77 89.5h14M93 89.5h4M98 89.5h2M115 89.5h4M122 89.5h5M136 89.5h8M155 89.5h12M169 89.5h1M174 89.5h14M200 89.5h1M204 89.5h8M215 89.5h2M234 89.5h1M2 90.5h11M24 90.5h5M30 90.5h5M36 90.5h2M48 90.5h3M52 90.5h1M55 90.5h5M61 90.5h3M65 90.5h5M76 90.5h12M91 90.5h9M115 90.5h3M123 90.5h1M140 90.5h3M154 90.5h3M161 90.5h7M169 90.5h1M174 90.5h18M204 90.5h8M215 90.5h3M233 90.5h3M1 91.5h12M23 91.5h5M30 91.5h9M48 91.5h3M55 91.5h15M76 91.5h12M92 91.5h8M140 91.5h3M154 91.5h3M161 91.5h5M167 91.5h3M174 91.5h11M187 91.5h6M206 91.5h6M216 91.5h3M232 91.5h4M0 92.5h14M22 92.5h2M26 92.5h2M33 92.5h4M47 92.5h5M55 92.5h34M91 92.5h6M98 92.5h4M139 92.5h7M155 92.5h3M161 92.5h10M175 92.5h17M206 92.5h5M214 92.5h2M218 92.5h7M231 92.5h5M0 93.5h14M21 93.5h2M31 93.5h7M47 93.5h4M55 93.5h10M66 93.5h18M85 93.5h10M99 93.5h4M140 93.5h7M155 93.5h3M162 93.5h10M175 93.5h2M178 93.5h11M204 93.5h7M213 93.5h4M218 93.5h7M232 93.5h4M0 94.5h10M11 94.5h3M21 94.5h2M24 94.5h14M45 94.5h6M55 94.5h10M66 94.5h17M85 94.5h10M100 94.5h3M104 94.5h2M114 94.5h2M139 94.5h8M155 94.5h2M164 94.5h8M179 94.5h2M182 94.5h7M196 94.5h3M203 94.5h4M209 94.5h17M233 94.5h3M0 95.5h9M11 95.5h3M21 95.5h1M24 95.5h14M45 95.5h5M55 95.5h1M57 95.5h7M68 95.5h15M86 95.5h10M100 95.5h6M109 95.5h4M114 95.5h3M121 95.5h6M132 95.5h1M136 95.5h11M151 95.5h5M165 95.5h7M179 95.5h1M182 95.5h6M196 95.5h11M211 95.5h9M221 95.5h5M233 95.5h3M0 96.5h2M4 96.5h4M11 96.5h4M20 96.5h18M45 96.5h4M54 96.5h6M61 96.5h2M69 96.5h16M86 96.5h4M92 96.5h4M99 96.5h4M107 96.5h1M109 96.5h7M121 96.5h2M124 96.5h5M131 96.5h16M151 96.5h4M167 96.5h5M183 96.5h5M196 96.5h10M211 96.5h5M221 96.5h8M233 96.5h2M0 97.5h2M6 97.5h1M14 97.5h2M20 97.5h2M27 97.5h10M45 97.5h4M54 97.5h6M69 97.5h5M75 97.5h15M94 97.5h9M110 97.5h3M120 97.5h2M124 97.5h12M137 97.5h10M150 97.5h3M167 97.5h6M194 97.5h11M211 97.5h4M221 97.5h8M232 97.5h3M0 98.5h2M14 98.5h3M19 98.5h2M27 98.5h1M29 98.5h6M45 98.5h5M52 98.5h1M54 98.5h2M57 98.5h3M67 98.5h6M79 98.5h12M95 98.5h8M105 98.5h1M110 98.5h2M120 98.5h11M132 98.5h15M149 98.5h1M167 98.5h7M194 98.5h6M201 98.5h4M208 98.5h5M222 98.5h4M231 98.5h4M0 99.5h3M13 99.5h4M18 99.5h2M28 99.5h7M45 99.5h5M52 99.5h4M58 99.5h2M66 99.5h6M80 99.5h8M97 99.5h6M105 99.5h1M109 99.5h3M122 99.5h4M127 99.5h2M132 99.5h20M167 99.5h6M177 99.5h1M192 99.5h1M194 99.5h6M202 99.5h9M222 99.5h3M231 99.5h5M0 100.5h4M11 100.5h9M28 100.5h6M45 100.5h4M52 100.5h4M58 100.5h2M66 100.5h5M80 100.5h6M99 100.5h8M110 100.5h1M131 100.5h9M143 100.5h9M166 100.5h3M171 100.5h3M176 100.5h3M191 100.5h10M203 100.5h7M223 100.5h3M232 100.5h4M1 101.5h3M10 101.5h9M28 101.5h7M45 101.5h4M50 101.5h11M66 101.5h2M100 101.5h2M103 101.5h4M130 101.5h8M145 101.5h6M166 101.5h2M172 101.5h7M187 101.5h1M191 101.5h10M205 101.5h5M221 101.5h2M233 101.5h3M1 102.5h2M10 102.5h8M28 102.5h9M44 102.5h20M65 102.5h3M129 102.5h6M145 102.5h6M167 102.5h2M172 102.5h7M187 102.5h2M193 102.5h8M204 102.5h7M221 102.5h4M234 102.5h1M0 103.5h2M9 103.5h9M29 103.5h3M43 103.5h25M131 103.5h4M144 103.5h6M167 103.5h3M172 103.5h10M187 103.5h1M193 103.5h9M204 103.5h7M221 103.5h4M234 103.5h2M0 104.5h1M9 104.5h6M29 104.5h1M43 104.5h2M46 104.5h20M119 104.5h1M142 104.5h7M168 104.5h2M173 104.5h15M194 104.5h14M209 104.5h3M216 104.5h10M235 104.5h1M0 105.5h1M9 105.5h5M28 105.5h2M42 105.5h3M49 105.5h10M60 105.5h5M118 105.5h2M142 105.5h5M169 105.5h18M195 105.5h12M212 105.5h15M229 105.5h1M9 106.5h5M28 106.5h2M39 106.5h6M50 106.5h7M61 106.5h5M84 106.5h2M116 106.5h1M118 106.5h1M142 106.5h5M169 106.5h10M180 106.5h1M183 106.5h4M196 106.5h10M214 106.5h6M221 106.5h10M0 107.5h6M9 107.5h5M31 107.5h1M38 107.5h8M50 107.5h7M63 107.5h3M84 107.5h5M110 107.5h1M113 107.5h6M142 107.5h4M157 107.5h5M169 107.5h3M175 107.5h4M185 107.5h2M197 107.5h9M216 107.5h3M224 107.5h7M0 108.5h6M10 108.5h5M20 108.5h3M31 108.5h12M50 108.5h9M63 108.5h2M68 108.5h3M81 108.5h1M84 108.5h7M109 108.5h10M142 108.5h2M156 108.5h7M175 108.5h3M184 108.5h3M198 108.5h9M216 108.5h2M224 108.5h7M0 109.5h6M12 109.5h3M18 109.5h6M31 109.5h12M50 109.5h9M63 109.5h9M81 109.5h5M88 109.5h3M109 109.5h10M131 109.5h3M142 109.5h1M154 109.5h10M172 109.5h1M175 109.5h4M183 109.5h4M198 109.5h9M208 109.5h1M217 109.5h2M224 109.5h8M0 110.5h4M11 110.5h4M17 110.5h7M31 110.5h11M49 110.5h14M64 110.5h8M78 110.5h7M88 110.5h3M109 110.5h9M130 110.5h7M145 110.5h1M153 110.5h16M172 110.5h6M183 110.5h4M198 110.5h6M205 110.5h8M216 110.5h4M223 110.5h10M0 111.5h2M11 111.5h4M16 111.5h4M21 111.5h3M30 111.5h4M36 111.5h5M48 111.5h25M76 111.5h9M88 111.5h4M109 111.5h7M130 111.5h8M145 111.5h2M158 111.5h4M163 111.5h13M183 111.5h5M198 111.5h2M206 111.5h15M222 111.5h10M0 112.5h2M11 112.5h3M16 112.5h7M29 112.5h4M36 112.5h5M49 112.5h34M89 112.5h4M109 112.5h5M130 112.5h8M145 112.5h4M157 112.5h19M183 112.5h5M196 112.5h3M209 112.5h2M212 112.5h2M215 112.5h17M12 113.5h11M28 113.5h6M35 113.5h3M40 113.5h1M48 113.5h2M54 113.5h23M78 113.5h6M87 113.5h7M121 113.5h2M130 113.5h8M145 113.5h7M158 113.5h19M183 113.5h5M196 113.5h3M215 113.5h18M12 114.5h3M16 114.5h7M29 114.5h9M48 114.5h2M56 114.5h8M67 114.5h9M79 114.5h5M92 114.5h1M102 114.5h1M121 114.5h2M130 114.5h9M146 114.5h6M158 114.5h20M181 114.5h9M198 114.5h1M215 114.5h13M231 114.5h5M10 115.5h4M16 115.5h1M18 115.5h5M27 115.5h10M48 115.5h2M57 115.5h7M68 115.5h8M79 115.5h3M83 115.5h2M99 115.5h8M121 115.5h2M137 115.5h3M145 115.5h7M160 115.5h19M181 115.5h9M214 115.5h14M231 115.5h3M235 115.5h1M9 116.5h5M19 116.5h3M29 116.5h7M47 116.5h3M57 116.5h7M68 116.5h8M79 116.5h2M84 116.5h1M99 116.5h8M121 116.5h2M137 116.5h4M143 116.5h9M160 116.5h5M166 116.5h25M212 116.5h15M232 116.5h2M235 116.5h1M5 117.5h2M8 117.5h8M18 117.5h4M30 117.5h1M33 117.5h3M47 117.5h3M56 117.5h7M67 117.5h9M78 117.5h6M99 117.5h8M136 117.5h14M161 117.5h3M166 117.5h24M212 117.5h10M223 117.5h4M232 117.5h4M4 118.5h15M25 118.5h1M32 118.5h4M47 118.5h6M54 118.5h9M65 118.5h19M100 118.5h7M135 118.5h3M140 118.5h9M162 118.5h6M169 118.5h2M172 118.5h15M199 118.5h1M212 118.5h3M218 118.5h4M223 118.5h4M234 118.5h2M4 119.5h15M26 119.5h1M32 119.5h5M46 119.5h18M66 119.5h19M101 119.5h6M134 119.5h3M140 119.5h2M143 119.5h9M162 119.5h9M173 119.5h7M181 119.5h5M199 119.5h1M201 119.5h1M210 119.5h6M218 119.5h4M224 119.5h3M235 119.5h1M0 120.5h1M4 120.5h15M27 120.5h1M35 120.5h2M46 120.5h30M77 120.5h9M101 120.5h6M134 120.5h2M143 120.5h10M162 120.5h9M172 120.5h7M181 120.5h7M190 120.5h5M210 120.5h12M224 120.5h4M235 120.5h1M0 121.5h1M4 121.5h18M27 121.5h4M32 121.5h1M35 121.5h3M44 121.5h31M78 121.5h8M96 121.5h1M101 121.5h7M132 121.5h3M143 121.5h11M158 121.5h3M164 121.5h10M176 121.5h4M181 121.5h4M186 121.5h2M190 121.5h7M199 121.5h1M211 121.5h11M226 121.5h2M233 121.5h3M0 122.5h23M26 122.5h5M32 122.5h7M43 122.5h7M51 122.5h24M80 122.5h6M93 122.5h5M101 122.5h7M117 122.5h3M131 122.5h4M143 122.5h11M156 122.5h4M165 122.5h9M177 122.5h11M191 122.5h10M209 122.5h6M220 122.5h2M227 122.5h2M232 122.5h4M2 123.5h2M6 123.5h8M16 123.5h15M32 123.5h7M42 123.5h8M52 123.5h18M72 123.5h4M80 123.5h4M91 123.5h8M101 123.5h7M118 123.5h3M127 123.5h2M130 123.5h5M143 123.5h7M151 123.5h3M156 123.5h4M166 123.5h8M177 123.5h10M191 123.5h11M209 123.5h4M221 123.5h3M227 123.5h9M3 124.5h1M6 124.5h7M16 124.5h12M29 124.5h10M42 124.5h28M72 124.5h12M91 124.5h16M126 124.5h8M143 124.5h7M151 124.5h4M156 124.5h5M167 124.5h7M179 124.5h6M189 124.5h14M209 124.5h4M221 124.5h4M227 124.5h1M229 124.5h7M6 125.5h6M19 125.5h8M28 125.5h20M50 125.5h20M73 125.5h11M90 125.5h15M116 125.5h3M125 125.5h1M127 125.5h7M142 125.5h6M149 125.5h11M167 125.5h7M182 125.5h11M194 125.5h10M208 125.5h4M221 125.5h4M227 125.5h3M231 125.5h5M6 126.5h2M10 126.5h2M20 126.5h4M29 126.5h7M37 126.5h5M50 126.5h11M65 126.5h5M73 126.5h5M79 126.5h5M88 126.5h14M116 126.5h8M128 126.5h6M139 126.5h1M141 126.5h7M149 126.5h10M167 126.5h7M181 126.5h7M191 126.5h1M193 126.5h10M208 126.5h4M221 126.5h4M226 126.5h4M232 126.5h4M6 127.5h2M9 127.5h4M20 127.5h3M30 127.5h5M39 127.5h3M49 127.5h6M66 127.5h4M74 127.5h4M80 127.5h3M85 127.5h1M87 127.5h3M94 127.5h7M116 127.5h7M127 127.5h6M137 127.5h20M167 127.5h2M170 127.5h3M181 127.5h4M193 127.5h10M208 127.5h4M221 127.5h7M229 127.5h7M6 128.5h7M21 128.5h2M29 128.5h2M41 128.5h1M48 128.5h6M65 128.5h5M73 128.5h5M81 128.5h1M85 128.5h4M96 128.5h5M116 128.5h8M128 128.5h5M136 128.5h8M146 128.5h11M167 128.5h5M182 128.5h4M193 128.5h10M205 128.5h7M221 128.5h7M230 128.5h5M4 129.5h4M9 129.5h4M17 129.5h1M20 129.5h3M27 129.5h3M41 129.5h1M48 129.5h6M63 129.5h7M73 129.5h6M81 129.5h1M86 129.5h3M96 129.5h4M116 129.5h8M128 129.5h4M136 129.5h8M146 129.5h3M150 129.5h2M153 129.5h4M166 129.5h5M182 129.5h4M196 129.5h5M202 129.5h12M221 129.5h7M233 129.5h3M3 130.5h5M11 130.5h4M16 130.5h5M26 130.5h1M40 130.5h5M49 130.5h6M62 130.5h8M73 130.5h9M86 130.5h3M93 130.5h2M96 130.5h4M115 130.5h9M126 130.5h5M133 130.5h2M137 130.5h2M142 130.5h2M145 130.5h4M150 130.5h2M153 130.5h3M166 130.5h3M182 130.5h4M193 130.5h21M222 130.5h6M230 130.5h1M233 130.5h3M1 131.5h7M11 131.5h4M17 131.5h3M26 131.5h1M37 131.5h1M39 131.5h7M51 131.5h4M60 131.5h10M73 131.5h9M85 131.5h4M92 131.5h14M108 131.5h1M116 131.5h22M143 131.5h9M154 131.5h1M161 131.5h2M166 131.5h4M181 131.5h2M192 131.5h20M213 131.5h4M223 131.5h5M229 131.5h2M233 131.5h3M0 132.5h9M10 132.5h5M18 132.5h2M36 132.5h10M51 132.5h14M67 132.5h3M73 132.5h9M85 132.5h21M108 132.5h1M112 132.5h1M117 132.5h21M142 132.5h12M160 132.5h5M167 132.5h3M192 132.5h4M198 132.5h2M201 132.5h9M214 132.5h4M222 132.5h8M3 133.5h11M34 133.5h25M62 133.5h8M74 133.5h9M85 133.5h15M101 133.5h6M116 133.5h10M129 133.5h1M131 133.5h7M139 133.5h5M146 133.5h11M160 133.5h5M167 133.5h3M192 133.5h3M197 133.5h2M202 133.5h7M215 133.5h15M232 133.5h2M4 134.5h7M22 134.5h1M32 134.5h9M42 134.5h17M62 134.5h7M74 134.5h8M85 134.5h2M88 134.5h3M94 134.5h4M101 134.5h6M108 134.5h3M116 134.5h4M132 134.5h6M139 134.5h5M148 134.5h21M191 134.5h5M197 134.5h2M202 134.5h8M215 134.5h15M232 134.5h2M5 135.5h4M21 135.5h2M32 135.5h28M62 135.5h4M74 135.5h9M85 135.5h1M89 135.5h1M101 135.5h13M118 135.5h1M135 135.5h8M148 135.5h21M192 135.5h7M201 135.5h3M206 135.5h4M215 135.5h14M5 136.5h3M22 136.5h1M32 136.5h23M58 136.5h8M78 136.5h5M101 136.5h13M135 136.5h7M149 136.5h6M157 136.5h13M192 136.5h13M206 136.5h3M211 136.5h4M217 136.5h3M221 136.5h7M4 137.5h3M31 137.5h18M51 137.5h3M58 137.5h7M78 137.5h5M101 137.5h13M122 137.5h2M135 137.5h6M149 137.5h5M158 137.5h12M191 137.5h14M208 137.5h21M4 138.5h2M31 138.5h18M52 138.5h3M58 138.5h7M76 138.5h7M105 138.5h8M122 138.5h2M134 138.5h8M149 138.5h3M157 138.5h13M178 138.5h2M192 138.5h4M198 138.5h7M208 138.5h22M0 139.5h5M22 139.5h2M32 139.5h14M52 139.5h4M58 139.5h5M74 139.5h4M79 139.5h4M106 139.5h8M122 139.5h3M133 139.5h10M149 139.5h3M156 139.5h5M163 139.5h1M165 139.5h6M192 139.5h1M203 139.5h3M207 139.5h14M222 139.5h13M0 140.5h2M23 140.5h1M33 140.5h10M52 140.5h4M58 140.5h5M73 140.5h5M81 140.5h2M100 140.5h1M107 140.5h7M121 140.5h4M133 140.5h11M150 140.5h3M155 140.5h4M165 140.5h2M170 140.5h2M204 140.5h2M207 140.5h6M223 140.5h1M226 140.5h8M21 141.5h3M33 141.5h10M52 141.5h12M72 141.5h5M85 141.5h3M99 141.5h2M107 141.5h7M121 141.5h5M133 141.5h8M142 141.5h2M150 141.5h4M155 141.5h4M163 141.5h4M171 141.5h9M208 141.5h5M227 141.5h7M20 142.5h4M38 142.5h3M42 142.5h2M52 142.5h11M71 142.5h1M74 142.5h3M84 142.5h5M91 142.5h4M97 142.5h4M106 142.5h8M120 142.5h7M132 142.5h9M142 142.5h3M150 142.5h5M156 142.5h2M164 142.5h3M172 142.5h8M206 142.5h1M208 142.5h6M227 142.5h6M20 143.5h6M39 143.5h5M51 143.5h12M84 143.5h2M87 143.5h11M103 143.5h11M120 143.5h7M132 143.5h1M135 143.5h6M143 143.5h2M149 143.5h6M156 143.5h3M164 143.5h4M176 143.5h4M193 143.5h1M204 143.5h3M208 143.5h4M227 143.5h6M6 144.5h4M17 144.5h10M40 144.5h4M50 144.5h12M73 144.5h1M82 144.5h18M102 144.5h4M108 144.5h6M119 144.5h8M136 144.5h5M143 144.5h2M149 144.5h2M152 144.5h3M156 144.5h3M165 144.5h3M174 144.5h7M204 144.5h3M209 144.5h1M223 144.5h1M227 144.5h2M231 144.5h2M6 145.5h4M17 145.5h11M29 145.5h1M41 145.5h5M49 145.5h5M55 145.5h6M71 145.5h3M82 145.5h7M91 145.5h1M94 145.5h6M102 145.5h5M109 145.5h5M119 145.5h8M140 145.5h5M148 145.5h2M153 145.5h2M156 145.5h4M166 145.5h5M172 145.5h9M190 145.5h1M203 145.5h4M217 145.5h1M230 145.5h2M0 146.5h1M7 146.5h4M17 146.5h15M42 146.5h12M55 146.5h3M71 146.5h5M81 146.5h7M91 146.5h8M101 146.5h13M119 146.5h6M130 146.5h2M141 146.5h3M147 146.5h3M154 146.5h1M158 146.5h2M167 146.5h15M183 146.5h2M189 146.5h2M202 146.5h8M216 146.5h3M229 146.5h2M0 147.5h2M6 147.5h7M18 147.5h2M22 147.5h3M27 147.5h7M42 147.5h17M68 147.5h9M81 147.5h8M90 147.5h20M111 147.5h3M119 147.5h5M130 147.5h4M143 147.5h1M147 147.5h1M159 147.5h2M167 147.5h5M173 147.5h1M176 147.5h9M189 147.5h2M200 147.5h11M229 147.5h2M0 148.5h2M5 148.5h8M23 148.5h2M27 148.5h9M42 148.5h1M46 148.5h14M67 148.5h11M80 148.5h11M92 148.5h22M116 148.5h1M119 148.5h4M130 148.5h4M146 148.5h2M159 148.5h2M169 148.5h6M176 148.5h8M189 148.5h3M196 148.5h2M199 148.5h14M232 148.5h4M0 149.5h2M5 149.5h9M23 149.5h2M27 149.5h9M40 149.5h3M47 149.5h14M63 149.5h6M70 149.5h1M72 149.5h29M102 149.5h1M106 149.5h8M117 149.5h6M130 149.5h3M147 149.5h1M158 149.5h3M168 149.5h7M177 149.5h1M182 149.5h2M189 149.5h3M197 149.5h17M215 149.5h1M228 149.5h2M232 149.5h4M0 150.5h3M5 150.5h11M22 150.5h3M26 150.5h1M28 150.5h8M39 150.5h2M47 150.5h2M50 150.5h17M73 150.5h3M79 150.5h19M99 150.5h1M106 150.5h7M131 150.5h2M147 150.5h1M156 150.5h4M168 150.5h6M182 150.5h2M186 150.5h1M190 150.5h3M198 150.5h7M206 150.5h8M227 150.5h9M0 151.5h17M22 151.5h5M30 151.5h5M38 151.5h4M43 151.5h1M47 151.5h2M51 151.5h15M74 151.5h2M79 151.5h19M107 151.5h5M129 151.5h4M146 151.5h2M152 151.5h6M166 151.5h10M182 151.5h2M186 151.5h1M191 151.5h2M198 151.5h6M206 151.5h8M227 151.5h8M0 152.5h17M23 152.5h22M47 152.5h1M51 152.5h15M73 152.5h2M81 152.5h2M87 152.5h10M108 152.5h4M129 152.5h3M137 152.5h2M147 152.5h2M150 152.5h6M166 152.5h2M169 152.5h8M181 152.5h4M186 152.5h5M198 152.5h6M209 152.5h2M227 152.5h8M5 153.5h1M8 153.5h17M27 153.5h17M52 153.5h14M71 153.5h4M81 153.5h5M87 153.5h9M109 153.5h3M125 153.5h1M137 153.5h4M147 153.5h5M173 153.5h6M181 153.5h10M193 153.5h1M198 153.5h7M206 153.5h5M225 153.5h1M228 153.5h5M5 154.5h1M9 154.5h16M27 154.5h6M34 154.5h9M52 154.5h14M71 154.5h4M81 154.5h5M88 154.5h8M109 154.5h3M123 154.5h1M137 154.5h6M147 154.5h5M173 154.5h21M199 154.5h3M203 154.5h9M225 154.5h1M228 154.5h4M4 155.5h9M15 155.5h6M22 155.5h3M34 155.5h9M48 155.5h1M54 155.5h20M81 155.5h5M88 155.5h4M109 155.5h4M137 155.5h7M146 155.5h8M174 155.5h20M196 155.5h1M198 155.5h2M204 155.5h9M226 155.5h5M3 156.5h10M16 156.5h5M23 156.5h2M35 156.5h8M47 156.5h3M54 156.5h8M65 156.5h8M81 156.5h11M109 156.5h4M123 156.5h1M133 156.5h11M146 156.5h9M165 156.5h1M175 156.5h1M177 156.5h23M205 156.5h8M219 156.5h1M223 156.5h1M227 156.5h3M3 157.5h8M16 157.5h4M22 157.5h2M35 157.5h5M47 157.5h4M54 157.5h7M68 157.5h4M81 157.5h11M108 157.5h5M122 157.5h2M132 157.5h23M165 157.5h1M167 157.5h1M175 157.5h2M178 157.5h21M205 157.5h8M218 157.5h2M223 157.5h2M228 157.5h3M2 158.5h8M18 158.5h5M43 158.5h8M52 158.5h10M69 158.5h1M80 158.5h9M97 158.5h1M108 158.5h5M120 158.5h4M131 158.5h19M152 158.5h4M166 158.5h6M175 158.5h2M179 158.5h4M184 158.5h15M205 158.5h9M219 158.5h2M222 158.5h2M228 158.5h3M1 159.5h7M18 159.5h5M31 159.5h1M42 159.5h19M80 159.5h13M97 159.5h1M108 159.5h5M115 159.5h9M131 159.5h19M153 159.5h3M165 159.5h12M179 159.5h4M185 159.5h2M189 159.5h11M202 159.5h14M218 159.5h6M229 159.5h2M234 159.5h2M0 160.5h8M31 160.5h2M38 160.5h6M45 160.5h9M55 160.5h5M80 160.5h2M84 160.5h11M108 160.5h3M112 160.5h11M131 160.5h17M154 160.5h2M164 160.5h24M189 160.5h8M199 160.5h26M230 160.5h6M1 161.5h8M32 161.5h1M38 161.5h5M46 161.5h1M48 161.5h11M80 161.5h17M107 161.5h15M132 161.5h18M153 161.5h3M161 161.5h17M180 161.5h11M193 161.5h20M214 161.5h11M230 161.5h5M2 162.5h7M12 162.5h3M37 162.5h7M46 162.5h12M79 162.5h17M107 162.5h6M115 162.5h7M132 162.5h18M153 162.5h4M159 162.5h19M181 162.5h1M184 162.5h5M194 162.5h10M208 162.5h10M220 162.5h6M232 162.5h2M2 163.5h8M12 163.5h3M33 163.5h22M60 163.5h2M75 163.5h21M108 163.5h15M131 163.5h9M141 163.5h8M153 163.5h15M170 163.5h7M185 163.5h4M195 163.5h9M208 163.5h9M221 163.5h1M224 163.5h4M0 164.5h1M2 164.5h14M32 164.5h22M71 164.5h14M87 164.5h9M109 164.5h14M131 164.5h2M142 164.5h7M154 164.5h10M165 164.5h2M171 164.5h4M176 164.5h1M186 164.5h3M196 164.5h8M208 164.5h9M225 164.5h3M0 165.5h17M26 165.5h3M32 165.5h7M42 165.5h2M45 165.5h9M60 165.5h1M70 165.5h7M78 165.5h2M87 165.5h9M109 165.5h14M131 165.5h3M142 165.5h8M151 165.5h3M155 165.5h7M164 165.5h3M171 165.5h4M176 165.5h1M178 165.5h3M185 165.5h4M196 165.5h5M208 165.5h12M224 165.5h3M0 166.5h9M11 166.5h7M20 166.5h1M22 166.5h2M26 166.5h3M32 166.5h6M41 166.5h3M47 166.5h7M58 166.5h3M71 166.5h4M78 166.5h2M88 166.5h7M109 166.5h11M122 166.5h4M132 166.5h2M142 166.5h2M145 166.5h9M155 166.5h12M171 166.5h5M178 166.5h3M184 166.5h5M196 166.5h3M208 166.5h13M224 166.5h3M0 167.5h6M11 167.5h7M19 167.5h11M32 167.5h6M40 167.5h3M48 167.5h5M58 167.5h4M71 167.5h3M78 167.5h4M88 167.5h4M93 167.5h2M108 167.5h12M122 167.5h4M129 167.5h2M132 167.5h2M142 167.5h12M155 167.5h5M161 167.5h3M170 167.5h19M191 167.5h4M197 167.5h1M208 167.5h10M223 167.5h3M0 168.5h5M12 168.5h6M19 168.5h24M49 168.5h4M58 168.5h4M71 168.5h2M78 168.5h3M107 168.5h12M129 168.5h4M142 168.5h17M169 168.5h1M172 168.5h17M191 168.5h7M207 168.5h10M223 168.5h3M0 169.5h4M14 169.5h28M49 169.5h4M58 169.5h3M68 169.5h4M78 169.5h2M103 169.5h2M106 169.5h7M117 169.5h2M129 169.5h5M140 169.5h3M144 169.5h2M151 169.5h7M172 169.5h17M191 169.5h3M195 169.5h4M206 169.5h11M222 169.5h3M229 169.5h2M233 169.5h3M0 170.5h3M15 170.5h27M49 170.5h4M59 170.5h1M67 170.5h5M77 170.5h2M96 170.5h1M103 170.5h3M107 170.5h5M117 170.5h2M125 170.5h8M139 170.5h3M145 170.5h1M151 170.5h4M174 170.5h17M193 170.5h7M206 170.5h11M221 170.5h4M228 170.5h8M15 171.5h26M50 171.5h3M55 171.5h2M59 171.5h1M67 171.5h4M76 171.5h3M96 171.5h1M104 171.5h2M107 171.5h4M117 171.5h3M125 171.5h8M138 171.5h4M143 171.5h3M149 171.5h3M175 171.5h17M193 171.5h7M207 171.5h5M213 171.5h12M227 171.5h9M18 172.5h15M35 172.5h10M58 172.5h1M67 172.5h4M75 172.5h3M92 172.5h2M105 172.5h2M108 172.5h4M116 172.5h4M124 172.5h7M138 172.5h8M149 172.5h3M177 172.5h7M189 172.5h11M209 172.5h2M213 172.5h18M235 172.5h1M19 173.5h13M39 173.5h6M56 173.5h3M68 173.5h8M88 173.5h2M92 173.5h3M106 173.5h1M108 173.5h3M117 173.5h3M123 173.5h6M137 173.5h10M149 173.5h1M176 173.5h8M190 173.5h11M209 173.5h2M212 173.5h9M222 173.5h7M27 174.5h5M42 174.5h3M55 174.5h4M70 174.5h6M90 174.5h5M106 174.5h1M108 174.5h2M117 174.5h8M127 174.5h2M136 174.5h12M176 174.5h8M191 174.5h9M209 174.5h2M212 174.5h5M219 174.5h5M227 174.5h2M15 175.5h3M28 175.5h10M43 175.5h3M55 175.5h4M71 175.5h5M92 175.5h4M116 175.5h8M126 175.5h3M136 175.5h3M142 175.5h6M177 175.5h6M192 175.5h6M199 175.5h1M212 175.5h5M220 175.5h4M227 175.5h2M12 176.5h6M28 176.5h11M44 176.5h2M55 176.5h4M72 176.5h4M85 176.5h4M92 176.5h5M98 176.5h1M115 176.5h9M126 176.5h3M135 176.5h4M144 176.5h4M179 176.5h4M190 176.5h8M199 176.5h2M212 176.5h4M221 176.5h4M227 176.5h2M2 177.5h3M13 177.5h4M27 177.5h13M43 177.5h3M55 177.5h3M71 177.5h7M85 177.5h5M92 177.5h7M115 177.5h9M126 177.5h3M134 177.5h6M145 177.5h2M167 177.5h1M179 177.5h5M189 177.5h8M221 177.5h4M227 177.5h2M231 177.5h2M1 178.5h8M15 178.5h2M24 178.5h8M34 178.5h6M42 178.5h6M55 178.5h4M63 178.5h3M71 178.5h8M85 178.5h14M104 178.5h1M116 178.5h13M135 178.5h5M148 178.5h5M167 178.5h1M179 178.5h6M186 178.5h11M199 178.5h1M223 178.5h5M231 178.5h3M0 179.5h11M24 179.5h8M35 179.5h13M52 179.5h7M62 179.5h4M70 179.5h4M76 179.5h3M80 179.5h1M90 179.5h8M104 179.5h1M116 179.5h12M135 179.5h4M149 179.5h4M166 179.5h1M179 179.5h2M182 179.5h7M190 179.5h11M223 179.5h5M229 179.5h6M0 180.5h9M23 180.5h10M39 180.5h9M50 180.5h9M61 180.5h6M70 180.5h3M76 180.5h6M91 180.5h11M106 180.5h2M116 180.5h11M135 180.5h3M150 180.5h3M179 180.5h1M191 180.5h1M195 180.5h7M224 180.5h12M0 181.5h10M23 181.5h10M40 181.5h9M51 181.5h4M57 181.5h9M71 181.5h2M74 181.5h5M81 181.5h3M91 181.5h12M116 181.5h4M123 181.5h4M135 181.5h4M149 181.5h2M179 181.5h3M196 181.5h9M218 181.5h2M224 181.5h12M1 182.5h10M25 182.5h7M39 182.5h15M58 182.5h8M72 182.5h6M82 182.5h2M91 182.5h12M105 182.5h1M116 182.5h4M123 182.5h5M134 182.5h6M149 182.5h2M179 182.5h4M199 182.5h7M218 182.5h2M224 182.5h4M231 182.5h5M1 183.5h5M7 183.5h4M26 183.5h6M40 183.5h14M59 183.5h3M63 183.5h3M74 183.5h3M83 183.5h2M92 183.5h15M113 183.5h4M123 183.5h5M134 183.5h6M150 183.5h2M180 183.5h3M198 183.5h8M219 183.5h1M231 183.5h5M0 184.5h6M8 184.5h2M28 184.5h3M41 184.5h12M59 184.5h3M63 184.5h3M76 184.5h1M78 184.5h3M84 184.5h3M91 184.5h15M113 184.5h5M122 184.5h7M136 184.5h5M143 184.5h3M149 184.5h3M173 184.5h1M181 184.5h1M198 184.5h8M226 184.5h4M232 184.5h4M0 185.5h10M24 185.5h2M28 185.5h2M42 185.5h11M64 185.5h3M77 185.5h2M80 185.5h1M85 185.5h2M90 185.5h10M101 185.5h5M110 185.5h8M122 185.5h1M125 185.5h5M136 185.5h10M147 185.5h6M198 185.5h1M201 185.5h6M211 185.5h1M226 185.5h3M232 185.5h4M0 186.5h10M21 186.5h2M24 186.5h6M42 186.5h11M64 186.5h3M76 186.5h5M82 186.5h2M85 186.5h22M110 186.5h9M124 186.5h6M134 186.5h19M171 186.5h4M176 186.5h2M198 186.5h2M201 186.5h5M209 186.5h4M215 186.5h1M225 186.5h3M232 186.5h4M3 187.5h7M21 187.5h2M24 187.5h6M42 187.5h11M65 187.5h3M76 187.5h15M92 187.5h15M110 187.5h9M124 187.5h6M134 187.5h6M141 187.5h11M170 187.5h8M193 187.5h1M198 187.5h5M205 187.5h1M209 187.5h8M225 187.5h4M232 187.5h4M4 188.5h7M20 188.5h10M41 188.5h7M49 188.5h4M66 188.5h4M76 188.5h3M80 188.5h11M93 188.5h14M110 188.5h9M125 188.5h5M135 188.5h5M142 188.5h11M154 188.5h5M170 188.5h8M186 188.5h3M193 188.5h3M198 188.5h5M209 188.5h8M223 188.5h4M232 188.5h2M0 189.5h2M4 189.5h5M10 189.5h3M19 189.5h12M41 189.5h6M49 189.5h4M63 189.5h2M66 189.5h4M72 189.5h1M76 189.5h3M81 189.5h10M95 189.5h3M99 189.5h8M110 189.5h6M124 189.5h5M135 189.5h5M142 189.5h17M172 189.5h6M185 189.5h4M192 189.5h4M200 189.5h3M211 189.5h4M223 189.5h3M231 189.5h5M0 190.5h8M10 190.5h3M19 190.5h13M37 190.5h1M42 190.5h4M49 190.5h10M61 190.5h1M65 190.5h5M72 190.5h5M82 190.5h9M95 190.5h3M99 190.5h6M106 190.5h1M111 190.5h5M125 190.5h4M135 190.5h5M142 190.5h7M150 190.5h9M173 190.5h5M185 190.5h11M199 190.5h1M211 190.5h3M223 190.5h3M231 190.5h5M0 191.5h6M19 191.5h13M35 191.5h5M45 191.5h1M48 191.5h11M65 191.5h6M73 191.5h4M83 191.5h7M95 191.5h3M102 191.5h2M110 191.5h6M126 191.5h2M134 191.5h14M151 191.5h3M157 191.5h2M173 191.5h3M184 191.5h17M224 191.5h2M232 191.5h4M2 192.5h3M19 192.5h12M34 192.5h4M39 192.5h2M45 192.5h15M63 192.5h9M73 192.5h5M86 192.5h4M95 192.5h3M100 192.5h4M110 192.5h3M133 192.5h15M149 192.5h6M157 192.5h3M174 192.5h3M183 192.5h16M200 192.5h2M222 192.5h4M233 192.5h3M3 193.5h4M10 193.5h4M19 193.5h10M34 193.5h8M46 193.5h14M63 193.5h15M87 193.5h4M97 193.5h7M110 193.5h2M133 193.5h13M147 193.5h8M157 193.5h2M172 193.5h9M183 193.5h20M210 193.5h3M221 193.5h5M231 193.5h3M235 193.5h1M3 194.5h11M19 194.5h8M34 194.5h8M50 194.5h9M63 194.5h16M87 194.5h9M98 194.5h4M134 194.5h11M147 194.5h11M170 194.5h35M211 194.5h2M220 194.5h8M231 194.5h5M5 195.5h10M18 195.5h3M23 195.5h1M35 195.5h7M51 195.5h2M54 195.5h5M63 195.5h12M78 195.5h2M88 195.5h15M131 195.5h1M134 195.5h8M146 195.5h11M166 195.5h1M170 195.5h15M187 195.5h2M190 195.5h15M211 195.5h1M223 195.5h13M6 196.5h11M18 196.5h6M35 196.5h2M38 196.5h5M50 196.5h2M55 196.5h4M62 196.5h5M68 196.5h3M73 196.5h2M79 196.5h2M88 196.5h15M134 196.5h7M147 196.5h9M165 196.5h20M193 196.5h7M203 196.5h3M223 196.5h13M6 197.5h18M33 197.5h3M37 197.5h5M50 197.5h3M54 197.5h5M61 197.5h9M73 197.5h2M80 197.5h1M89 197.5h14M134 197.5h3M139 197.5h2M149 197.5h7M164 197.5h4M170 197.5h2M174 197.5h11M193 197.5h6M203 197.5h3M224 197.5h12M7 198.5h1M10 198.5h8M21 198.5h3M33 198.5h3M38 198.5h5M50 198.5h3M54 198.5h21M80 198.5h4M89 198.5h1M95 198.5h7M139 198.5h2M150 198.5h6M164 198.5h4M170 198.5h2M175 198.5h10M193 198.5h5M203 198.5h5M223 198.5h13M5 199.5h2M10 199.5h8M22 199.5h2M33 199.5h3M40 199.5h4M48 199.5h5M60 199.5h12M73 199.5h5M80 199.5h4M89 199.5h1M96 199.5h6M111 199.5h3M118 199.5h1M131 199.5h2M151 199.5h5M164 199.5h21M193 199.5h4M203 199.5h6M223 199.5h13M4 200.5h10M15 200.5h5M22 200.5h3M33 200.5h3M38 200.5h1M40 200.5h1M45 200.5h8M61 200.5h2M67 200.5h2M74 200.5h5M81 200.5h3M88 200.5h1M90 200.5h1M93 200.5h9M111 200.5h8M130 200.5h3M153 200.5h2M164 200.5h11M176 200.5h9M193 200.5h6M203 200.5h6M223 200.5h13M4 201.5h10M16 201.5h10M33 201.5h3M45 201.5h7M60 201.5h2M75 201.5h5M82 201.5h6M90 201.5h1M93 201.5h6M100 201.5h2M111 201.5h4M116 201.5h4M130 201.5h4M135 201.5h2M153 201.5h2M166 201.5h6M177 201.5h8M192 201.5h5M198 201.5h3M203 201.5h1M206 201.5h3M224 201.5h12M4 202.5h10M18 202.5h17M45 202.5h6M59 202.5h5M75 202.5h5M82 202.5h5M94 202.5h5M110 202.5h10M129 202.5h7M154 202.5h2M163 202.5h1M166 202.5h3M176 202.5h1M178 202.5h9M192 202.5h5M199 202.5h5M208 202.5h2M223 202.5h1M225 202.5h5M231 202.5h5M3 203.5h11M17 203.5h17M45 203.5h5M58 203.5h7M72 203.5h14M109 203.5h10M125 203.5h9M140 203.5h1M144 203.5h1M153 203.5h4M161 203.5h7M175 203.5h13M193 203.5h10M220 203.5h9M232 203.5h4M0 204.5h12M17 204.5h16M46 204.5h4M57 204.5h3M64 204.5h2M72 204.5h6M79 204.5h7M91 204.5h1M108 204.5h1M111 204.5h8M122 204.5h12M140 204.5h1M142 204.5h4M153 204.5h4M158 204.5h9M176 204.5h13M194 204.5h6M220 204.5h10M232 204.5h3M0 205.5h11M17 205.5h16M47 205.5h3M57 205.5h3M64 205.5h3M71 205.5h15M90 205.5h3M101 205.5h1M104 205.5h1M111 205.5h9M122 205.5h12M141 205.5h6M152 205.5h16M172 205.5h1M174 205.5h1M176 205.5h16M197 205.5h2M220 205.5h10M233 205.5h2M0 206.5h1M3 206.5h9M17 206.5h16M57 206.5h2M65 206.5h3M70 206.5h9M80 206.5h3M89 206.5h5M101 206.5h6M114 206.5h6M121 206.5h13M141 206.5h5M151 206.5h20M176 206.5h2M180 206.5h7M188 206.5h5M197 206.5h1M220 206.5h10M233 206.5h2M0 207.5h1M5 207.5h22M30 207.5h3M57 207.5h2M65 207.5h13M80 207.5h2M89 207.5h5M98 207.5h9M115 207.5h4M121 207.5h3M125 207.5h9M141 207.5h5M148 207.5h1M151 207.5h12M167 207.5h4M176 207.5h2M182 207.5h5M189 207.5h4M220 207.5h11M233 207.5h2M5 208.5h16M22 208.5h10M58 208.5h1M65 208.5h12M89 208.5h17M115 208.5h5M121 208.5h1M125 208.5h9M141 208.5h1M143 208.5h6M151 208.5h11M168 208.5h3M173 208.5h1M184 208.5h3M189 208.5h4M205 208.5h1M221 208.5h15M3 209.5h8M13 209.5h2M16 209.5h1M19 209.5h1M24 209.5h8M57 209.5h2M64 209.5h12M87 209.5h10M98 209.5h6M105 209.5h2M110 209.5h1M113 209.5h1M115 209.5h5M125 209.5h11M143 209.5h15M159 209.5h2M168 209.5h7M185 209.5h7M205 209.5h1M221 209.5h12M234 209.5h2M3 210.5h12M23 210.5h6M31 210.5h4M36 210.5h1M39 210.5h1M57 210.5h3M63 210.5h9M73 210.5h2M87 210.5h8M100 210.5h4M105 210.5h14M127 210.5h10M143 210.5h15M171 210.5h5M186 210.5h5M201 210.5h1M209 210.5h2M221 210.5h4M227 210.5h9M2 211.5h12M21 211.5h8M32 211.5h10M57 211.5h4M62 211.5h10M73 211.5h2M79 211.5h3M94 211.5h2M100 211.5h18M119 211.5h1M122 211.5h3M128 211.5h8M142 211.5h8M151 211.5h8M169 211.5h9M187 211.5h4M200 211.5h2M210 211.5h1M228 211.5h8M2 212.5h10M21 212.5h21M52 212.5h3M58 212.5h5M65 212.5h1M68 212.5h17M94 212.5h4M100 212.5h5M107 212.5h6M128 212.5h8M142 212.5h8M157 212.5h3M170 212.5h9M188 212.5h3M200 212.5h3M223 212.5h2M227 212.5h4M2 213.5h8M23 213.5h13M37 213.5h5M51 213.5h8M60 213.5h1M69 213.5h17M95 213.5h4M100 213.5h5M106 213.5h6M127 213.5h2M130 213.5h6M142 213.5h7M158 213.5h3M170 213.5h10M188 213.5h5M196 213.5h3M201 213.5h3M224 213.5h5M230 213.5h1M0 214.5h8M18 214.5h1M24 214.5h8M35 214.5h3M41 214.5h3M51 214.5h5M57 214.5h1M69 214.5h17M88 214.5h1M95 214.5h15M124 214.5h1M127 214.5h9M143 214.5h6M159 214.5h5M171 214.5h10M189 214.5h2M193 214.5h5M224 214.5h4M0 215.5h7M17 215.5h2M24 215.5h7M34 215.5h4M43 215.5h3M51 215.5h6M68 215.5h11M83 215.5h26M124 215.5h2M130 215.5h6M145 215.5h4M159 215.5h1M162 215.5h21M188 215.5h4M193 215.5h7M223 215.5h6M0 216.5h7M16 216.5h5M23 216.5h7M33 216.5h6M43 216.5h15M69 216.5h10M83 216.5h24M125 216.5h2M132 216.5h2M146 216.5h3M163 216.5h15M179 216.5h21M219 216.5h10M1 217.5h7M18 217.5h3M23 217.5h5M32 217.5h3M36 217.5h2M46 217.5h14M71 217.5h10M83 217.5h23M122 217.5h1M137 217.5h1M146 217.5h4M152 217.5h6M163 217.5h7M171 217.5h10M185 217.5h1M187 217.5h13M220 217.5h7M233 217.5h1M0 218.5h9M13 218.5h1M18 218.5h3M32 218.5h3M36 218.5h2M47 218.5h14M70 218.5h19M93 218.5h12M121 218.5h3M144 218.5h7M152 218.5h7M163 218.5h7M171 218.5h4M176 218.5h4M188 218.5h12M219 218.5h8M232 218.5h3M0 219.5h9M13 219.5h2M16 219.5h6M32 219.5h6M48 219.5h13M70 219.5h18M94 219.5h11M119 219.5h5M139 219.5h11M152 219.5h7M163 219.5h11M176 219.5h3M190 219.5h9M218 219.5h3M223 219.5h4M232 219.5h4M2 220.5h7M13 220.5h2M16 220.5h6M31 220.5h9M48 220.5h6M55 220.5h7M70 220.5h18M93 220.5h12M110 220.5h3M119 220.5h6M139 220.5h21M163 220.5h11M176 220.5h3M182 220.5h1M190 220.5h4M200 220.5h6M218 220.5h2M224 220.5h2M232 220.5h4M3 221.5h4M12 221.5h2M16 221.5h6M26 221.5h1M33 221.5h4M39 221.5h2M48 221.5h5M55 221.5h13M71 221.5h4M76 221.5h12M90 221.5h13M107 221.5h11M119 221.5h6M139 221.5h21M163 221.5h2M168 221.5h6M177 221.5h2M182 221.5h2M188 221.5h5M199 221.5h7M218 221.5h4M224 221.5h2M233 221.5h3M12 222.5h2M17 222.5h5M33 222.5h4M40 222.5h2M48 222.5h4M55 222.5h14M72 222.5h2M80 222.5h15M96 222.5h7M106 222.5h18M139 222.5h2M144 222.5h16M162 222.5h3M168 222.5h7M177 222.5h4M182 222.5h3M188 222.5h5M200 222.5h7M217 222.5h8M233 222.5h3M12 223.5h1M17 223.5h6M33 223.5h5M41 223.5h2M48 223.5h2M54 223.5h4M59 223.5h10M81 223.5h12M95 223.5h5M101 223.5h2M107 223.5h4M112 223.5h7M120 223.5h4M140 223.5h3M144 223.5h21M169 223.5h20M200 223.5h6M221 223.5h4M234 223.5h2M17 224.5h6M33 224.5h5M42 224.5h2M48 224.5h1M54 224.5h3M59 224.5h5M67 224.5h2M82 224.5h11M95 224.5h8M107 224.5h3M117 224.5h3M121 224.5h2M127 224.5h2M140 224.5h4M146 224.5h19M169 224.5h19M197 224.5h9M221 224.5h5M234 224.5h2M17 225.5h7M30 225.5h3M34 225.5h1M42 225.5h2M47 225.5h2M56 225.5h2M60 225.5h4M67 225.5h3M79 225.5h2M83 225.5h20M104 225.5h5M115 225.5h8M130 225.5h1M140 225.5h3M146 225.5h15M169 225.5h2M173 225.5h15M197 225.5h9M220 225.5h7M229 225.5h2M16 226.5h18M42 226.5h2M47 226.5h2M57 226.5h1M61 226.5h9M79 226.5h3M84 226.5h13M99 226.5h10M115 226.5h7M141 226.5h2M145 226.5h16M169 226.5h2M176 226.5h3M182 226.5h3M214 226.5h2M219 226.5h9M16 227.5h19M42 227.5h3M48 227.5h1M57 227.5h2M61 227.5h8M71 227.5h4M79 227.5h1M82 227.5h11M99 227.5h9M115 227.5h6M140 227.5h3M144 227.5h4M152 227.5h7M169 227.5h3M176 227.5h2M183 227.5h3M215 227.5h14M17 228.5h17M43 228.5h2M48 228.5h1M57 228.5h3M62 228.5h2M65 228.5h3M71 228.5h2M78 228.5h1M82 228.5h11M99 228.5h9M114 228.5h3M140 228.5h3M144 228.5h4M153 228.5h3M169 228.5h3M174 228.5h4M185 228.5h5M215 228.5h14M4 229.5h2M17 229.5h5M23 229.5h11M43 229.5h2M48 229.5h2M57 229.5h3M62 229.5h1M73 229.5h1M78 229.5h14M100 229.5h1M102 229.5h1M104 229.5h5M114 229.5h2M140 229.5h8M154 229.5h2M169 229.5h10M185 229.5h9M215 229.5h13M0 230.5h8M18 230.5h3M26 230.5h4M31 230.5h4M44 230.5h3M48 230.5h2M57 230.5h5M73 230.5h1M77 230.5h9M88 230.5h5M99 230.5h3M106 230.5h4M114 230.5h3M139 230.5h8M167 230.5h14M185 230.5h10M216 230.5h7M224 230.5h4M0 231.5h3M7 231.5h2M17 231.5h3M26 231.5h3M32 231.5h2M45 231.5h5M58 231.5h3M77 231.5h8M88 231.5h1M91 231.5h1M99 231.5h4M107 231.5h3M114 231.5h2M142 231.5h5M163 231.5h2M166 231.5h16M185 231.5h11M217 231.5h3M225 231.5h1M0 232.5h3M8 232.5h2M18 232.5h1M26 232.5h2M32 232.5h2M46 232.5h5M58 232.5h2M76 232.5h10M98 232.5h6M108 232.5h1M115 232.5h2M145 232.5h2M164 232.5h32M205 232.5h3M217 232.5h3M0 233.5h1M8 233.5h2M19 233.5h1M27 233.5h1M32 233.5h3M46 233.5h5M73 233.5h8M82 233.5h3M97 233.5h8M107 233.5h2M115 233.5h3M121 233.5h3M167 233.5h9M180 233.5h11M193 233.5h4M200 233.5h3M204 233.5h5M215 233.5h1M219 233.5h1M0 234.5h1M8 234.5h2M16 234.5h6M27 234.5h2M33 234.5h3M47 234.5h3M73 234.5h7M84 234.5h2M96 234.5h5M102 234.5h7M115 234.5h4M121 234.5h4M138 234.5h4M154 234.5h3M168 234.5h6M182 234.5h8M193 234.5h16M211 234.5h3M215 234.5h3M219 234.5h1M0 235.5h1M8 235.5h3M15 235.5h7M28 235.5h1M34 235.5h2M45 235.5h2M48 235.5h1M74 235.5h5M83 235.5h3M96 235.5h2M103 235.5h5M115 235.5h4M121 235.5h5M136 235.5h1M139 235.5h4M153 235.5h3M166 235.5h8M183 235.5h3M187 235.5h2M194 235.5h15M211 235.5h9" stroke="url(#dz)" stroke-width="1"/><path d="M1 0.5h1M17 0.5h3M40 0.5h3M50 0.5h4M67 0.5h1M75 0.5h4M113 0.5h1M123 0.5h1M134 0.5h6M156 0.5h5M192 0.5h2M0 1.5h2M18 1.5h1M50 1.5h4M76 1.5h3M113 1.5h2M127 1.5h1M134 1.5h6M156 1.5h3M192 1.5h2M0 2.5h2M51 2.5h4M77 2.5h1M126 2.5h4M133 2.5h7M191 2.5h3M231 2.5h2M0 3.5h1M52 3.5h5M77 3.5h2M126 3.5h4M133 3.5h7M190 3.5h5M231 3.5h2M53 4.5h4M76 4.5h2M126 4.5h3M131 4.5h7M139 4.5h1M189 4.5h9M232 4.5h3M52 5.5h8M130 5.5h8M189 5.5h11M232 5.5h3M9 6.5h1M51 6.5h9M132 6.5h1M135 6.5h2M195 6.5h4M232 6.5h2M36 7.5h2M49 7.5h11M69 7.5h2M110 7.5h2M36 8.5h2M48 8.5h13M68 8.5h4M109 8.5h5M177 8.5h1M36 9.5h4M49 9.5h1M54 9.5h7M68 9.5h5M112 9.5h2M34 10.5h7M48 10.5h1M55 10.5h5M67 10.5h7M177 10.5h1M192 10.5h1M0 11.5h1M33 11.5h8M56 11.5h3M66 11.5h8M149 11.5h1M191 11.5h3M32 12.5h9M58 12.5h1M65 12.5h7M133 12.5h1M189 12.5h7M6 13.5h1M33 13.5h6M65 13.5h7M132 13.5h3M190 13.5h6M33 14.5h4M70 14.5h1M132 14.5h2M190 14.5h6M132 15.5h2M158 15.5h2M190 15.5h7M126 16.5h2M132 16.5h1M158 16.5h2M190 16.5h8M125 17.5h4M190 17.5h8M50 18.5h3M115 18.5h1M125 18.5h3M190 18.5h8M49 19.5h4M114 19.5h3M124 19.5h4M190 19.5h8M221 19.5h1M50 20.5h4M114 20.5h3M124 20.5h3M158 20.5h1M190 20.5h8M220 20.5h2M50 21.5h2M86 21.5h1M115 21.5h1M158 21.5h2M193 21.5h6M205 21.5h3M216 21.5h7M7 22.5h2M86 22.5h1M194 22.5h6M206 22.5h5M216 22.5h6M6 23.5h3M61 23.5h5M82 23.5h2M197 23.5h3M206 23.5h3M210 23.5h1M215 23.5h2M219 23.5h3M7 24.5h3M60 24.5h6M81 24.5h3M91 24.5h3M207 24.5h1M219 24.5h4M7 25.5h3M16 25.5h1M60 25.5h5M91 25.5h3M219 25.5h4M6 26.5h3M15 26.5h1M92 26.5h2M220 26.5h3M221 27.5h1M30 28.5h2M218 28.5h1M26 29.5h2M94 29.5h1M26 30.5h2M98 32.5h1M104 32.5h2M97 33.5h4M103 33.5h3M9 34.5h2M97 34.5h6M141 34.5h3M11 35.5h1M98 35.5h4M140 35.5h5M10 36.5h2M140 36.5h5M10 37.5h1M69 37.5h5M140 37.5h4M145 37.5h1M10 38.5h3M66 38.5h2M69 38.5h4M140 38.5h3M204 38.5h3M11 39.5h1M70 39.5h1M87 39.5h1M130 39.5h1M141 39.5h1M205 39.5h3M86 40.5h2M129 40.5h2M206 40.5h1M23 41.5h1M129 41.5h1M21 42.5h3M126 42.5h1M21 43.5h3M196 43.5h2M22 44.5h4M195 44.5h5M22 45.5h5M195 45.5h5M21 46.5h7M196 46.5h4M21 47.5h7M83 47.5h2M196 47.5h3M21 48.5h7M83 48.5h2M23 49.5h5M211 49.5h2M23 50.5h4M142 50.5h2M165 50.5h1M211 50.5h2M141 51.5h3M165 51.5h2M141 52.5h3M164 52.5h3M173 52.5h2M142 53.5h1M164 53.5h12M91 54.5h1M164 54.5h12M119 55.5h3M164 55.5h13M119 56.5h3M165 56.5h13M38 57.5h1M119 57.5h3M150 57.5h2M171 57.5h8M188 57.5h1M190 57.5h1M37 58.5h3M150 58.5h3M174 58.5h4M188 58.5h3M198 58.5h3M37 59.5h3M151 59.5h2M159 59.5h1M176 59.5h2M188 59.5h3M198 59.5h2M234 59.5h2M151 60.5h1M176 60.5h2M188 60.5h3M198 60.5h2M202 60.5h2M234 60.5h2M0 61.5h1M88 61.5h1M176 61.5h2M188 61.5h3M199 61.5h5M233 61.5h3M0 62.5h3M174 62.5h5M188 62.5h3M199 62.5h4M233 62.5h3M2 63.5h1M175 63.5h6M188 63.5h2M198 63.5h5M233 63.5h3M175 64.5h5M198 64.5h4M5 65.5h2M175 65.5h4M198 65.5h4M5 66.5h2M145 66.5h4M154 66.5h1M175 66.5h3M198 66.5h1M200 66.5h2M6 67.5h2M20 67.5h3M28 67.5h2M31 67.5h2M145 67.5h5M153 67.5h3M174 67.5h2M6 68.5h3M19 68.5h7M27 68.5h6M40 68.5h2M146 68.5h4M153 68.5h2M174 68.5h3M22 69.5h5M147 69.5h3M174 69.5h3M22 70.5h5M147 70.5h3M24 71.5h3M57 73.5h2M194 73.5h2M57 74.5h3M129 74.5h1M194 74.5h2M55 75.5h1M57 75.5h5M162 75.5h4M194 75.5h3M55 76.5h8M162 76.5h5M195 76.5h1M56 77.5h9M162 77.5h4M228 77.5h1M56 78.5h9M141 78.5h2M163 78.5h2M58 79.5h7M138 79.5h4M60 80.5h4M138 80.5h4M61 81.5h2M140 81.5h2M181 81.5h1M226 81.5h1M180 82.5h3M91 83.5h2M94 83.5h2M183 83.5h1M0 84.5h1M88 84.5h7M183 84.5h1M23 85.5h1M89 85.5h5M21 86.5h4M90 86.5h4M21 87.5h5M89 87.5h5M16 88.5h2M20 88.5h6M89 88.5h5M185 88.5h1M14 89.5h12M91 89.5h2M97 89.5h1M13 90.5h11M35 90.5h1M51 90.5h1M53 90.5h2M88 90.5h3M13 91.5h10M51 91.5h4M88 91.5h4M166 91.5h1M14 92.5h8M52 92.5h3M89 92.5h2M97 92.5h1M14 93.5h7M51 93.5h4M84 93.5h1M95 93.5h4M14 94.5h7M51 94.5h4M83 94.5h2M95 94.5h5M207 94.5h2M14 95.5h7M50 95.5h5M56 95.5h1M83 95.5h3M96 95.5h4M207 95.5h4M15 96.5h5M49 96.5h5M85 96.5h1M96 96.5h3M123 96.5h1M206 96.5h5M16 97.5h4M49 97.5h5M122 97.5h2M205 97.5h6M17 98.5h2M50 98.5h2M53 98.5h1M205 98.5h3M17 99.5h1M50 99.5h2M49 100.5h3M169 100.5h2M0 101.5h1M49 101.5h1M168 101.5h4M0 102.5h1M169 102.5h3M170 103.5h2M170 104.5h3M208 104.5h1M59 105.5h1M207 105.5h5M57 106.5h4M179 106.5h1M181 106.5h2M206 106.5h8M57 107.5h6M179 107.5h6M206 107.5h10M59 108.5h4M178 108.5h6M207 108.5h9M59 109.5h4M179 109.5h4M207 109.5h1M209 109.5h8M63 110.5h1M178 110.5h5M213 110.5h3M20 111.5h1M34 111.5h2M176 111.5h7M33 112.5h3M176 112.5h7M34 113.5h1M77 113.5h1M177 113.5h6M64 114.5h3M76 114.5h3M178 114.5h3M228 114.5h3M64 115.5h4M76 115.5h3M179 115.5h2M228 115.5h3M64 116.5h4M76 116.5h3M227 116.5h5M63 117.5h4M76 117.5h2M227 117.5h5M63 118.5h2M138 118.5h2M215 118.5h3M227 118.5h7M64 119.5h2M137 119.5h3M142 119.5h1M180 119.5h1M216 119.5h2M227 119.5h8M136 120.5h7M179 120.5h2M228 120.5h7M135 121.5h8M180 121.5h1M228 121.5h5M135 122.5h8M229 122.5h3M135 123.5h8M150 123.5h1M134 124.5h9M150 124.5h1M134 125.5h8M8 126.5h2M134 126.5h5M140 126.5h1M8 127.5h1M90 127.5h4M133 127.5h4M169 127.5h1M89 128.5h7M133 128.5h3M8 129.5h1M89 129.5h7M132 129.5h4M8 130.5h3M89 130.5h4M95 130.5h1M131 130.5h2M135 130.5h2M139 130.5h3M8 131.5h3M89 131.5h3M138 131.5h5M212 131.5h1M9 132.5h1M65 132.5h2M138 132.5h4M196 132.5h2M200 132.5h1M210 132.5h4M0 133.5h3M59 133.5h3M138 133.5h1M195 133.5h2M199 133.5h3M209 133.5h6M0 134.5h4M59 134.5h3M138 134.5h1M196 134.5h1M199 134.5h3M210 134.5h5M0 135.5h5M60 135.5h2M199 135.5h2M210 135.5h5M0 136.5h5M155 136.5h2M209 136.5h2M215 136.5h2M220 136.5h1M0 137.5h4M49 137.5h2M154 137.5h4M0 138.5h4M49 138.5h3M152 138.5h5M46 139.5h6M152 139.5h4M43 140.5h9M153 140.5h2M167 140.5h3M43 141.5h9M141 141.5h1M154 141.5h1M167 141.5h4M41 142.5h1M44 142.5h8M141 142.5h1M155 142.5h1M167 142.5h5M44 143.5h7M141 143.5h2M155 143.5h1M168 143.5h8M44 144.5h6M106 144.5h2M141 144.5h2M151 144.5h1M155 144.5h1M168 144.5h6M46 145.5h3M89 145.5h2M92 145.5h2M107 145.5h2M150 145.5h3M155 145.5h1M171 145.5h1M88 146.5h3M150 146.5h4M155 146.5h3M89 147.5h1M110 147.5h1M148 147.5h11M172 147.5h1M174 147.5h2M91 148.5h1M148 148.5h11M175 148.5h1M69 149.5h1M71 149.5h1M148 149.5h10M175 149.5h2M178 149.5h4M67 150.5h6M148 150.5h8M174 150.5h8M66 151.5h8M148 151.5h4M176 151.5h6M235 151.5h1M66 152.5h7M83 152.5h4M149 152.5h1M177 152.5h4M235 152.5h1M0 153.5h5M6 153.5h2M66 153.5h5M86 153.5h1M179 153.5h2M233 153.5h3M0 154.5h5M6 154.5h3M66 154.5h5M86 154.5h2M202 154.5h1M232 154.5h4M0 155.5h4M21 155.5h1M86 155.5h2M200 155.5h4M231 155.5h5M0 156.5h3M21 156.5h2M176 156.5h1M200 156.5h5M230 156.5h6M0 157.5h3M20 157.5h2M177 157.5h1M199 157.5h6M231 157.5h5M0 158.5h2M150 158.5h2M177 158.5h2M183 158.5h1M199 158.5h6M231 158.5h5M0 159.5h1M150 159.5h3M177 159.5h2M183 159.5h2M187 159.5h2M200 159.5h2M231 159.5h3M44 160.5h1M82 160.5h2M111 160.5h1M148 160.5h6M188 160.5h1M197 160.5h2M43 161.5h3M47 161.5h1M150 161.5h3M178 161.5h2M213 161.5h1M44 162.5h2M113 162.5h2M150 162.5h3M178 162.5h3M182 162.5h2M218 162.5h2M149 163.5h4M177 163.5h8M217 163.5h4M222 163.5h2M149 164.5h5M164 164.5h1M175 164.5h1M177 164.5h9M217 164.5h8M39 165.5h3M77 165.5h1M150 165.5h1M154 165.5h1M162 165.5h2M175 165.5h1M177 165.5h1M181 165.5h4M220 165.5h4M38 166.5h3M75 166.5h3M144 166.5h1M154 166.5h1M176 166.5h2M181 166.5h3M221 166.5h3M38 167.5h2M74 167.5h4M154 167.5h1M218 167.5h5M73 168.5h5M217 168.5h6M72 169.5h6M143 169.5h1M217 169.5h5M72 170.5h5M142 170.5h3M217 170.5h4M71 171.5h5M142 171.5h1M33 172.5h2M71 172.5h4M184 172.5h5M231 172.5h4M32 173.5h7M184 173.5h6M221 173.5h1M229 173.5h7M32 174.5h10M125 174.5h2M184 174.5h7M224 174.5h3M229 174.5h7M38 175.5h5M124 175.5h2M183 175.5h9M224 175.5h3M229 175.5h7M39 176.5h5M124 176.5h2M183 176.5h7M225 176.5h2M229 176.5h7M40 177.5h3M124 177.5h2M184 177.5h5M225 177.5h2M229 177.5h2M233 177.5h3M40 178.5h2M185 178.5h1M228 178.5h3M234 178.5h2M74 179.5h2M228 179.5h1M235 179.5h1M73 180.5h3M55 181.5h2M73 181.5h1M0 182.5h1M54 182.5h4M0 183.5h1M54 183.5h5M62 183.5h1M53 184.5h6M62 184.5h1M53 185.5h11M199 185.5h2M53 186.5h11M200 186.5h1M0 187.5h3M53 187.5h12M91 187.5h1M140 187.5h1M0 188.5h4M53 188.5h13M91 188.5h2M140 188.5h2M234 188.5h2M2 189.5h2M53 189.5h10M65 189.5h1M91 189.5h4M140 189.5h2M59 190.5h2M62 190.5h3M91 190.5h4M140 190.5h2M59 191.5h6M90 191.5h5M154 191.5h3M60 192.5h3M90 192.5h5M155 192.5h2M60 193.5h3M91 193.5h6M155 193.5h2M59 194.5h4M96 194.5h2M21 195.5h2M59 195.5h4M75 195.5h3M59 196.5h3M67 196.5h1M71 196.5h2M75 196.5h4M200 196.5h3M59 197.5h2M70 197.5h3M75 197.5h5M172 197.5h2M199 197.5h4M18 198.5h3M75 198.5h5M172 198.5h3M198 198.5h5M18 199.5h4M78 199.5h2M197 199.5h6M14 200.5h1M20 200.5h2M79 200.5h2M199 200.5h4M14 201.5h2M80 201.5h2M115 201.5h1M197 201.5h1M201 201.5h2M14 202.5h4M80 202.5h2M197 202.5h2M14 203.5h3M12 204.5h5M60 204.5h4M78 204.5h1M235 204.5h1M11 205.5h6M60 205.5h4M235 205.5h1M12 206.5h5M59 206.5h6M187 206.5h1M235 206.5h1M27 207.5h3M59 207.5h6M187 207.5h2M235 207.5h1M59 208.5h6M187 208.5h2M11 209.5h2M59 209.5h5M97 209.5h1M104 209.5h1M29 210.5h2M60 210.5h3M95 210.5h5M104 210.5h1M29 211.5h3M61 211.5h1M96 211.5h4M150 211.5h1M98 212.5h2M105 212.5h2M150 212.5h7M99 213.5h1M105 213.5h1M149 213.5h9M38 214.5h3M149 214.5h10M38 215.5h5M79 215.5h4M149 215.5h10M160 215.5h2M39 216.5h4M79 216.5h4M149 216.5h14M178 216.5h1M0 217.5h1M38 217.5h8M81 217.5h2M150 217.5h2M158 217.5h5M170 217.5h1M181 217.5h4M186 217.5h1M38 218.5h9M89 218.5h4M151 218.5h1M159 218.5h4M170 218.5h1M180 218.5h8M38 219.5h10M88 219.5h6M150 219.5h2M159 219.5h4M179 219.5h11M221 219.5h2M40 220.5h8M88 220.5h5M160 220.5h3M179 220.5h3M183 220.5h7M220 220.5h4M41 221.5h7M88 221.5h2M160 221.5h3M179 221.5h3M184 221.5h4M222 221.5h2M42 222.5h6M141 222.5h3M160 222.5h2M181 222.5h1M185 222.5h3M43 223.5h5M111 223.5h1M119 223.5h1M143 223.5h1M44 224.5h4M64 224.5h3M110 224.5h7M120 224.5h1M144 224.5h2M44 225.5h3M64 225.5h3M109 225.5h6M143 225.5h3M44 226.5h3M109 226.5h6M143 226.5h2M179 226.5h3M45 227.5h3M108 227.5h7M143 227.5h1M178 227.5h5M45 228.5h3M108 228.5h6M143 228.5h1M178 228.5h7M45 229.5h3M109 229.5h5M179 229.5h6M30 230.5h1M47 230.5h1M110 230.5h4M181 230.5h4M3 231.5h4M29 231.5h3M110 231.5h4M182 231.5h3M3 232.5h5M28 232.5h4M109 232.5h6M1 233.5h7M28 233.5h4M109 233.5h6M1 234.5h7M29 234.5h4M101 234.5h1M109 234.5h6M1 235.5h7M29 235.5h5M98 235.5h5M108 235.5h7M186 235.5h1" stroke="#9d6e48" stroke-width="1"/></g><rect x="20.6" y="219.4" width="3" height="1.7" fill="#f08aa8"/><rect x="267.1" y="177.3" width="3" height="1.7" fill="#f08aa8"/><rect x="3.1" y="143.7" width="3" height="1.7" fill="#f08aa8"/><rect x="268.5" y="124.7" width="3" height="1.7" fill="#f08aa8"/><rect x="51.2" y="94.5" width="3" height="1.7" fill="#f08aa8"/><rect x="245.7" y="102.8" width="3" height="1.7" fill="#f08aa8"/><rect x="233.0" y="241.9" width="3" height="1.7" fill="#f08aa8"/><rect x="106.7" y="98.8" width="3" height="1.7" fill="#f08aa8"/><rect x="111.1" y="192.1" width="3" height="1.7" fill="#f08aa8"/><rect x="89.2" y="39.3" width="3" height="1.7" fill="#f08aa8"/><rect x="120.6" y="154.8" width="3" height="1.7" fill="#f08aa8"/><rect x="198.1" y="18.4" width="3" height="1.7" fill="#f08aa8"/><rect x="168.0" y="79.9" width="3" height="1.7" fill="#f08aa8"/><rect x="42.9" y="181.6" width="3" height="1.7" fill="#f08aa8"/><rect x="264.4" y="170.6" width="3" height="1.7" fill="#f08aa8"/><rect x="243.1" y="135.0" width="3" height="1.7" fill="#f08aa8"/><rect x="33.8" y="236.6" width="3" height="1.7" fill="#f08aa8"/><rect x="258.3" y="263.9" width="3" height="1.7" fill="#f08aa8"/><rect x="86.0" y="21.9" width="3" height="1.7" fill="#f08aa8"/><rect x="209.6" y="152.8" width="3" height="1.7" fill="#f08aa8"/><rect x="258.2" y="245.1" width="3" height="1.7" fill="#f08aa8"/><rect x="255.0" y="94.9" width="3" height="1.7" fill="#f08aa8"/><rect x="195.1" y="189.1" width="3" height="1.7" fill="#f08aa8"/><rect x="81.0" y="156.3" width="3" height="1.7" fill="#f08aa8"/><rect x="124.0" y="200.3" width="3" height="1.7" fill="#f08aa8"/><rect x="43.1" y="186.8" width="3" height="1.7" fill="#f08aa8"/><rect x="35.6" y="25.1" width="3" height="1.7" fill="#f08aa8"/><rect x="162.1" y="269.9" width="3" height="1.7" fill="#f08aa8"/><rect x="194.5" y="276.4" width="3" height="1.7" fill="#f08aa8"/><rect x="202.5" y="102.1" width="3" height="1.7" fill="#f08aa8"/><rect x="161.1" y="157.8" width="3" height="1.7" fill="#f08aa8"/><rect x="274.0" y="120.2" width="3" height="1.7" fill="#f08aa8"/><rect x="5.0" y="12.1" width="3" height="1.7" fill="#f08aa8"/><rect x="195.6" y="83.3" width="3" height="1.7" fill="#f08aa8"/><rect x="56.9" y="133.0" width="3" height="1.7" fill="#f08aa8"/><rect x="74.8" y="267.5" width="3" height="1.7" fill="#f08aa8"/><rect x="269.8" y="168.1" width="3" height="1.7" fill="#f08aa8"/><rect x="176.0" y="83.3" width="3" height="1.7" fill="#f08aa8"/><rect x="10.3" y="81.7" width="3" height="1.7" fill="#f08aa8"/><rect x="150.7" y="39.5" width="3" height="1.7" fill="#f08aa8"/><rect x="53.8" y="180.3" width="3" height="1.7" fill="#f08aa8"/><rect x="148.5" y="242.2" width="3" height="1.7" fill="#f08aa8"/><rect x="199.9" y="127.4" width="3" height="1.7" fill="#f08aa8"/><rect x="11.0" y="203.6" width="3" height="1.7" fill="#f08aa8"/><rect x="189.3" y="68.9" width="3" height="1.7" fill="#f08aa8"/><rect x="178.0" y="154.5" width="3" height="1.7" fill="#f08aa8"/><rect x="63.3" y="14.2" width="3" height="1.7" fill="#f08aa8"/><rect x="247.9" y="272.0" width="3" height="1.7" fill="#f08aa8"/><rect x="106.3" y="206.9" width="3" height="1.7" fill="#f08aa8"/><rect x="253.7" y="216.1" width="3" height="1.7" fill="#f08aa8"/><rect x="206.2" y="124.9" width="3" height="1.7" fill="#f08aa8"/><rect x="245.4" y="98.0" width="3" height="1.7" fill="#f08aa8"/><rect x="7.5" y="148.3" width="3" height="1.7" fill="#f08aa8"/><rect x="63.9" y="223.2" width="3" height="1.7" fill="#f08aa8"/><rect x="251.8" y="232.6" width="3" height="1.7" fill="#f08aa8"/><rect x="21.0" y="57.4" width="3" height="1.7" fill="#f08aa8"/><rect x="56.4" y="28.1" width="3" height="1.7" fill="#f08aa8"/><rect x="33.7" y="239.1" width="3" height="1.7" fill="#f08aa8"/><rect x="38.0" y="116.3" width="3" height="1.7" fill="#f08aa8"/><rect x="90.1" y="32.8" width="3" height="1.7" fill="#f08aa8"/><rect x="9.1" y="224.1" width="3" height="1.7" fill="#f08aa8"/><rect x="242.0" y="263.3" width="3" height="1.7" fill="#f08aa8"/><rect x="93.0" y="192.5" width="3" height="1.7" fill="#f08aa8"/><rect x="148.3" y="251.9" width="3" height="1.7" fill="#f08aa8"/><rect x="218.1" y="209.3" width="3" height="1.7" fill="#f08aa8"/><rect x="192.2" y="245.3" width="3" height="1.7" fill="#f08aa8"/><rect x="211.4" y="199.9" width="3" height="1.7" fill="#f08aa8"/><rect x="85.5" y="52.6" width="3" height="1.7" fill="#f08aa8"/><rect x="136.9" y="254.4" width="3" height="1.7" fill="#f08aa8"/><rect x="93.2" y="256.0" width="3" height="1.7" fill="#f08aa8"/><rect x="33.1" y="83.7" width="3" height="1.7" fill="#f08aa8"/><rect x="174.3" y="204.2" width="3" height="1.7" fill="#f08aa8"/><rect x="187.8" y="193.1" width="3" height="1.7" fill="#f08aa8"/><rect x="100.1" y="209.9" width="3" height="1.7" fill="#f08aa8"/><rect x="127.1" y="129.1" width="3" height="1.7" fill="#f08aa8"/><rect x="147.7" y="233.7" width="3" height="1.7" fill="#f08aa8"/><rect x="47.4" y="135.8" width="3" height="1.7" fill="#f08aa8"/><rect x="229.2" y="54.7" width="3" height="1.7" fill="#f08aa8"/><rect x="103.6" y="271.1" width="3" height="1.7" fill="#f08aa8"/><rect x="84.1" y="4.6" width="3" height="1.7" fill="#f08aa8"/><rect x="104.3" y="221.6" width="3" height="1.7" fill="#f08aa8"/><rect x="85.6" y="53.2" width="3" height="1.7" fill="#f08aa8"/><rect x="84.2" y="4.2" width="3" height="1.7" fill="#f08aa8"/><rect x="213.1" y="254.0" width="3" height="1.7" fill="#f08aa8"/><rect x="239.5" y="148.7" width="3" height="1.7" fill="#f08aa8"/><rect x="210.9" y="265.4" width="3" height="1.7" fill="#f08aa8"/><rect x="167.5" y="68.4" width="3" height="1.7" fill="#f08aa8"/><rect x="233.2" y="229.0" width="3" height="1.7" fill="#f08aa8"/><rect x="215.2" y="92.3" width="3" height="1.7" fill="#f08aa8"/><rect x="192.7" y="62.7" width="3" height="1.7" fill="#f08aa8"/><rect x="81.2" y="97.5" width="3" height="1.7" fill="#f08aa8"/><rect x="137.0" y="203.9" width="3" height="1.7" fill="#f08aa8"/><rect x="243.7" y="83.9" width="3" height="1.7" fill="#f08aa8"/><rect x="25.2" y="29.7" width="3" height="1.7" fill="#f08aa8"/><rect x="252.6" y="83.7" width="3" height="1.7" fill="#f08aa8"/><rect x="176.9" y="212.8" width="3" height="1.7" fill="#f08aa8"/><rect x="82.6" y="140.2" width="3" height="1.7" fill="#f08aa8"/><rect x="202.5" y="87.3" width="3" height="1.7" fill="#f08aa8"/><rect x="18.8" y="252.8" width="3" height="1.7" fill="#f08aa8"/><rect x="250.8" y="20.5" width="3" height="1.7" fill="#f08aa8"/><rect x="139.9" y="172.6" width="3" height="1.7" fill="#f08aa8"/><rect x="57.5" y="89.1" width="3" height="1.7" fill="#f08aa8"/><rect x="107.1" y="16.1" width="3" height="1.7" fill="#f08aa8"/><rect x="21.7" y="111.8" width="3" height="1.7" fill="#f08aa8"/><rect x="163.6" y="240.9" width="3" height="1.7" fill="#f08aa8"/><rect x="224.2" y="16.6" width="3" height="1.7" fill="#f08aa8"/><rect x="216.2" y="261.2" width="3" height="1.7" fill="#f08aa8"/><rect x="183.8" y="266.4" width="3" height="1.7" fill="#f08aa8"/><rect x="175.9" y="223.7" width="3" height="1.7" fill="#f08aa8"/><rect x="183.0" y="264.6" width="3" height="1.7" fill="#f08aa8"/><rect x="69.3" y="187.2" width="3" height="1.7" fill="#4cc0d8"/><rect x="210.2" y="108.8" width="3" height="1.7" fill="#4cc0d8"/><rect x="176.5" y="238.6" width="3" height="1.7" fill="#4cc0d8"/><rect x="235.3" y="72.8" width="3" height="1.7" fill="#4cc0d8"/><rect x="59.5" y="50.4" width="3" height="1.7" fill="#4cc0d8"/><rect x="226.8" y="31.2" width="3" height="1.7" fill="#4cc0d8"/><rect x="16.9" y="276.6" width="3" height="1.7" fill="#4cc0d8"/><rect x="52.0" y="88.6" width="3" height="1.7" fill="#4cc0d8"/><rect x="137.2" y="12.3" width="3" height="1.7" fill="#4cc0d8"/><rect x="173.0" y="148.2" width="3" height="1.7" fill="#4cc0d8"/><rect x="31.3" y="69.2" width="3" height="1.7" fill="#4cc0d8"/><rect x="208.5" y="25.0" width="3" height="1.7" fill="#4cc0d8"/><rect x="250.7" y="141.3" width="3" height="1.7" fill="#4cc0d8"/><rect x="3.2" y="244.6" width="3" height="1.7" fill="#4cc0d8"/><rect x="37.3" y="53.2" width="3" height="1.7" fill="#4cc0d8"/><rect x="89.1" y="97.1" width="3" height="1.7" fill="#4cc0d8"/><rect x="253.6" y="256.2" width="3" height="1.7" fill="#4cc0d8"/><rect x="35.2" y="104.4" width="3" height="1.7" fill="#4cc0d8"/><rect x="151.7" y="257.7" width="3" height="1.7" fill="#4cc0d8"/><rect x="270.6" y="221.8" width="3" height="1.7" fill="#4cc0d8"/><rect x="212.6" y="16.5" width="3" height="1.7" fill="#4cc0d8"/><rect x="142.8" y="59.9" width="3" height="1.7" fill="#4cc0d8"/><rect x="99.5" y="260.0" width="3" height="1.7" fill="#4cc0d8"/><rect x="14.6" y="266.6" width="3" height="1.7" fill="#4cc0d8"/><rect x="124.7" y="236.4" width="3" height="1.7" fill="#4cc0d8"/><rect x="81.7" y="239.6" width="3" height="1.7" fill="#4cc0d8"/><rect x="12.7" y="228.8" width="3" height="1.7" fill="#4cc0d8"/><rect x="4.7" y="244.3" width="3" height="1.7" fill="#4cc0d8"/><rect x="17.7" y="114.9" width="3" height="1.7" fill="#4cc0d8"/><rect x="7.0" y="9.6" width="3" height="1.7" fill="#4cc0d8"/><rect x="247.4" y="274.7" width="3" height="1.7" fill="#4cc0d8"/><rect x="4.9" y="94.4" width="3" height="1.7" fill="#4cc0d8"/><rect x="102.4" y="28.3" width="3" height="1.7" fill="#4cc0d8"/><rect x="272.2" y="96.9" width="3" height="1.7" fill="#4cc0d8"/><rect x="24.7" y="219.1" width="3" height="1.7" fill="#4cc0d8"/><rect x="221.7" y="249.8" width="3" height="1.7" fill="#4cc0d8"/><rect x="49.7" y="106.5" width="3" height="1.7" fill="#4cc0d8"/><rect x="16.4" y="273.2" width="3" height="1.7" fill="#4cc0d8"/><rect x="201.0" y="175.5" width="3" height="1.7" fill="#4cc0d8"/><rect x="81.0" y="146.6" width="3" height="1.7" fill="#4cc0d8"/></svg>
<div class="plot" style="left:11.4px;top:326.7px;width:301.20000000000005px;height:68.0px"></div><div class="a pt2" style="left:-22.4px;width:307.4px;top:327.9px">Animal Culls</div><div class="a" style="background:#fff;left:27.6px;top:337px;width:207.4px;height:49px"></div><div class="a ax" style="left:27.6px;top:385.2px">0</div><div class="a ax" style="left:194px;width:40px;top:385.2px;text-align:right">2740</div><div class="a ax" style="left:-13.399999999999999px;width:40px;top:338px;text-align:right">139</div><div class="a ax" style="left:-13.399999999999999px;width:40px;top:376.5px;text-align:right">0</div><div class="a lg" style="left:237px;top:336.5px;width:73.8px;height:9.3px;overflow:hidden"><i style="background:#3d63c6"></i><span>Harvested Males</span></div><div class="a lg" style="left:237px;top:345.8px;width:73.8px;height:9.3px;overflow:hidden"><i style="background:#d93a2f"></i><span>Harvested Females</span></div><div class="a lg" style="left:237px;top:355.1px;width:73.8px;height:9.3px;overflow:hidden"><i style="background:#2c8a2c"></i><span>Raided Males</span></div><div class="a lg" style="left:237px;top:364.4px;width:73.8px;height:9.3px;overflow:hidden"><i style="background:#f0f03a"></i><span>Raided Females</span></div><svg class="a" style="left:0;top:0" width="738" height="600"><path d="M32.5 385.4 L216.0 385.4" stroke="#e8705a" stroke-width="1.1" fill="none"/><path d="M28.0 381.4 L30.5 381.4 L30.5 378.0 L32.5 377.5 L32.5 375.0 L60.0 370.0 L90.0 365.0 L135.0 357.0 L170.0 350.5 L211.0 341.7" stroke="#4a6fd0" stroke-width="1.0" fill="none"/><path d="M32.5 385.4 L32.5 369.0 L43.6 369.0 L43.6 364.5 L90.0 361.7 L110.0 359.0 L135.0 355.8 L170.2 352.6 L170.2 349.0 L205.0 347.5 L207.5 347.2 L207.5 341.5 L216.1 341.2" stroke="#f2f24a" stroke-width="1.0" fill="none"/><path d="M32.7 385.4 L32.7 361.3 L65.0 358.3 L90.0 357.6 L110.0 357.0 L135.0 356.3 L176.2 354.8 L176.2 351.5 L202.0 350.3 L216.0 349.6" stroke="#3d9a48" stroke-width="1.0" fill="none"/></svg>
<div class="plot" style="left:11.4px;top:397.3px;width:301.20000000000005px;height:64.19999999999999px"></div><div class="a pt2" style="left:-22.4px;width:381.4px;top:398.5px">Proportion of Grazed to Ungrazed Grass</div><div class="a" style="background:#fff;left:27.6px;top:407px;width:281.4px;height:46.39999999999998px"></div><div class="a ax" style="left:27.6px;top:452.59999999999997px">0</div><div class="a ax" style="left:268px;width:40px;top:452.59999999999997px;text-align:right">2740</div><div class="a ax" style="left:-13.399999999999999px;width:40px;top:408px;text-align:right">100</div><div class="a ax" style="left:-13.399999999999999px;width:40px;top:443.9px;text-align:right">0</div><svg class="a" style="left:0;top:0" width="738" height="600"><path d="M27.6 418.7 L31.5 423.0 L33.5 422.0 L46.3 429.3 L46.3 420.0 L50.3 420.0 L65.7 427.5 L65.7 420.0 L69.7 420.0 L84.3 427.5 L84.3 420.0 L88.3 420.0 L103.2 427.5 L103.2 420.0 L107.2 420.0 L121.5 427.5 L121.5 420.0 L125.5 420.0 L140.0 427.5 L140.0 420.0 L144.0 420.0 L158.8 427.5 L158.8 420.0 L162.8 420.0 L177.9 427.5 L177.9 420.0 L181.9 420.0 L196.6 427.5 L196.6 420.0 L200.6 420.0 L215.3 427.5 L215.3 420.0 L219.3 420.0 L234.2 427.5 L234.2 420.0 L238.2 420.0 L252.5 427.5 L252.5 420.0 L256.5 420.0 L271.4 427.5 L271.4 420.0 L275.4 420.0 L283.0 424.8" stroke="#40b050" stroke-width="1.0" fill="none"/></svg>
<div class="plot" style="left:11.4px;top:465px;width:301.20000000000005px;height:65px"></div><div class="a pt2" style="left:-22.4px;width:346.70000000000005px;top:466.2px">Average Energy</div><div class="a" style="background:#fff;left:27.6px;top:475px;width:246.70000000000002px;height:46px"></div><div class="a ax" style="left:27.6px;top:520.2px">0</div><div class="a ax" style="left:233.3px;width:40px;top:520.2px;text-align:right">2740</div><div class="a ax" style="left:-13.399999999999999px;width:40px;top:476px;text-align:right">106</div><div class="a ax" style="left:-13.399999999999999px;width:40px;top:511.5px;text-align:right">0</div><div class="a lg" style="left:276.3px;top:474.5px;width:34.5px;height:9.3px;overflow:hidden"><i style="background:#8c8c8c"></i><span>Animals</span></div><svg class="a" style="left:0;top:0" width="738" height="600"><path d="M27.6 483.0 L31.5 492.0 L39.0 492.5 L45.0 489.0 L60.0 482.0 L62.0 480.0 L68.0 479.0 L71.0 479.2 L74.0 479.5 L77.0 479.2 L80.0 479.2 L83.0 478.9 L86.0 478.0 L89.0 477.7 L92.0 478.3 L95.0 477.5 L98.0 477.4 L101.0 478.2 L104.0 477.8 L107.0 478.4 L110.0 478.3 L113.0 478.7 L116.0 478.5 L119.0 479.3 L122.0 479.7 L125.0 479.5 L128.0 479.7 L131.0 479.6 L134.0 478.8 L137.0 479.3 L140.0 478.8 L143.0 478.2 L146.0 477.7 L149.0 478.3 L152.0 477.7 L155.0 477.9 L158.0 478.1 L161.0 478.1 L164.0 478.5 L167.0 478.2 L170.0 478.9 L173.0 478.9 L176.0 479.6 L179.0 479.8 L182.0 479.1 L185.0 479.1 L188.0 479.1 L191.0 479.7 L194.0 478.9 L197.0 478.8 L200.0 478.2 L203.0 478.1 L206.0 477.8 L209.0 477.6 L212.0 477.8 L215.0 477.8 L218.0 478.3 L221.0 478.3 L224.0 478.8 L227.0 479.0 L230.0 479.5 L233.0 479.4 L236.0 479.1 L239.0 479.9 L242.0 479.9 L245.0 479.8 L248.0 479.3 L251.0 479.2" stroke="#8a8a8a" stroke-width="0.9" fill="none"/></svg>
<div class="plot" style="left:320.6px;top:464.8px;width:286.4px;height:64.99999999999994px"></div><div class="a pt2" style="left:286.6px;width:313.19999999999993px;top:466.0px">Population</div><div class="a" style="background:#fff;left:336.6px;top:474.9px;width:213.19999999999993px;height:46.30000000000007px"></div><div class="a ax" style="left:336.6px;top:520.4000000000001px">0</div><div class="a ax" style="left:508.79999999999995px;width:40px;top:520.4000000000001px;text-align:right">2740</div><div class="a ax" style="left:295.6px;width:40px;top:475.9px;text-align:right">536</div><div class="a ax" style="left:295.6px;width:40px;top:511.70000000000005px;text-align:right">0</div><div class="a lg" style="left:551.8px;top:474.4px;width:53.4px;height:9.3px;overflow:hidden"><i style="background:#52c4c4"></i><span>Male</span></div><div class="a lg" style="left:551.8px;top:483.7px;width:53.4px;height:9.3px;overflow:hidden"><i style="background:#d870b0"></i><span>Female</span></div><div class="a lg" style="left:551.8px;top:493.0px;width:53.4px;height:9.3px;overflow:hidden"><i style="background:#000"></i><span>Total Animals</span></div><svg class="a" style="left:0;top:0" width="738" height="600"><path d="M337.0 501.0 L340.0 506.0 L344.0 513.0 L348.0 516.5 L355.0 518.0 L365.0 518.5 L365.0 517.0 L393.3 518.0 L393.3 516.8 L421.9 518.0 L421.9 517.3 L450.1 518.0 L450.1 517.3 L465.0 518.0 L490.0 518.5 L500.0 518.5 L507.0 518.0 L507.0 517.3 L530.2 517.3" stroke="#40c0c8" stroke-width="0.9" fill="none"/><path d="M337.0 499.5 L339.0 501.0 L342.0 507.0 L346.0 512.5 L350.0 515.5 L360.0 517.0 L365.0 517.8 L365.0 515.0 L393.3 515.8 L393.3 514.0 L421.9 514.5 L421.9 513.5 L450.1 514.5 L450.1 513.5 L478.5 513.5 L478.5 512.5 L507.0 512.3 L507.0 511.3 L530.2 511.5" stroke="#d870b8" stroke-width="0.9" fill="none"/><path d="M336.9 479.0 L339.0 482.0 L341.0 490.0 L343.0 500.0 L346.0 508.0 L350.0 513.0 L354.0 514.3 L362.0 514.6 L365.0 515.0 L365.0 511.6 L374.0 512.0 L393.3 513.5 L393.3 510.3 L410.0 511.6 L421.9 512.0 L421.9 510.3 L440.0 511.5 L450.1 511.5 L450.1 510.0 L463.0 510.5 L478.5 511.0 L478.5 508.8 L490.0 509.5 L507.0 510.5 L507.0 507.5 L516.0 507.0 L530.2 508.5" stroke="#333" stroke-width="0.85" fill="none"/></svg>
<div class="a" style="left:327px;top:511.5px;transform:rotate(-90deg);transform-origin:0 0;font-size:7.7px;color:#222;line-height:9px">Numbe</div>
<div class="a" style="left:5px;top:539.6px;width:728px;height:5.8px;background:#d4d6dc;border-top:1px solid #9a9a9a;border-bottom:1px solid #b0b0b0"></div>
<svg class="a" style="left:23px;top:541px" width="12" height="4"><path d="M1 3.2 L4.2 3.2 L2.6 1.2Z M7.8 1.4 L11 1.4 L9.4 3.4Z" fill="#222"/></svg>
<div class="a" style="left:5px;top:545.2px;width:728px;height:13.4px;background:#bdbde5"></div>
<div class="a" style="left:6px;top:547px;font-size:8px;font-weight:bold;color:#111;line-height:9px">Command Center</div>
<div class="a" style="left:683.9px;top:548px;width:17px;height:8.4px;background:linear-gradient(#fdfdfd,#e2e2e2);border:1px solid #9a9a9a;border-radius:2px"></div>
<svg class="a" style="left:688.5px;top:549px" width="8" height="7"><path d="M2.6 4.4 L5.6 1.4" stroke="#000" stroke-width="1.5"/><path d="M4 0.6 H7 V3.6Z" fill="#000"/><rect x="1" y="3.4" width="2.8" height="2.8" fill="#000"/></svg>
<div class="a" style="left:703.7px;top:548px;width:26.5px;height:8.4px;background:linear-gradient(#fdfdfd,#e2e2e2);border:1px solid #9a9a9a;border-radius:2px"></div>
<div class="a" style="left:709.3px;top:548.3px;font-size:6.8px;font-weight:bold;color:#333;line-height:8px;letter-spacing:0.35px">Clear</div>
<div class="a" style="left:5px;top:558.4px;width:728px;height:23px;background:#bdbde5"></div><div class="a" style="left:6.6px;top:559.3px;width:724px;height:22.4px;background:#fff;border:1px solid;border-color:#a8a8b4 #e0e0e8 #b0b0bc #a8a8b4"></div>
<div class="a" style="left:722.4px;top:559.5px;width:7.6px;height:21px;background:#eee"></div>
<div class="a" style="left:723.5px;top:565.5px;width:6.5px;height:8px;background:radial-gradient(circle at 70% 50%,#e4e4e4,#a8a8a8);border-radius:4px 0 0 4px"></div>
<svg class="a" style="left:724.3px;top:561.6px" width="4" height="4"><path d="M0 3 L3.6 3 L1.8 0Z" fill="#333"/></svg>
<svg class="a" style="left:724.3px;top:575.8px" width="4" height="4"><path d="M0 0 L3.6 0 L1.8 3Z" fill="#333"/></svg>
<div class="a" style="left:5px;top:581.6px;width:728px;height:13.3px;background:#bdbde5;border-left:1.5px solid #e8e8f0"></div>
<div class="a" style="left:6px;top:582.5px;font-size:7.7px;color:#222;line-height:9px">observer&gt;</div>
<div class="a" style="left:42.2px;top:583px;width:667.8px;height:10px;background:#fff;border:1px solid #7ea6d0"></div>
<div class="a" style="left:711.9px;top:582.3px;width:18.1px;height:11px;background:#e4e4ea;border-radius:2px"></div>
<svg class="a" style="left:718px;top:586px" width="6" height="4"><path d="M0 0 L6 0 L3 4Z" fill="#111"/></svg>
</body></html>
